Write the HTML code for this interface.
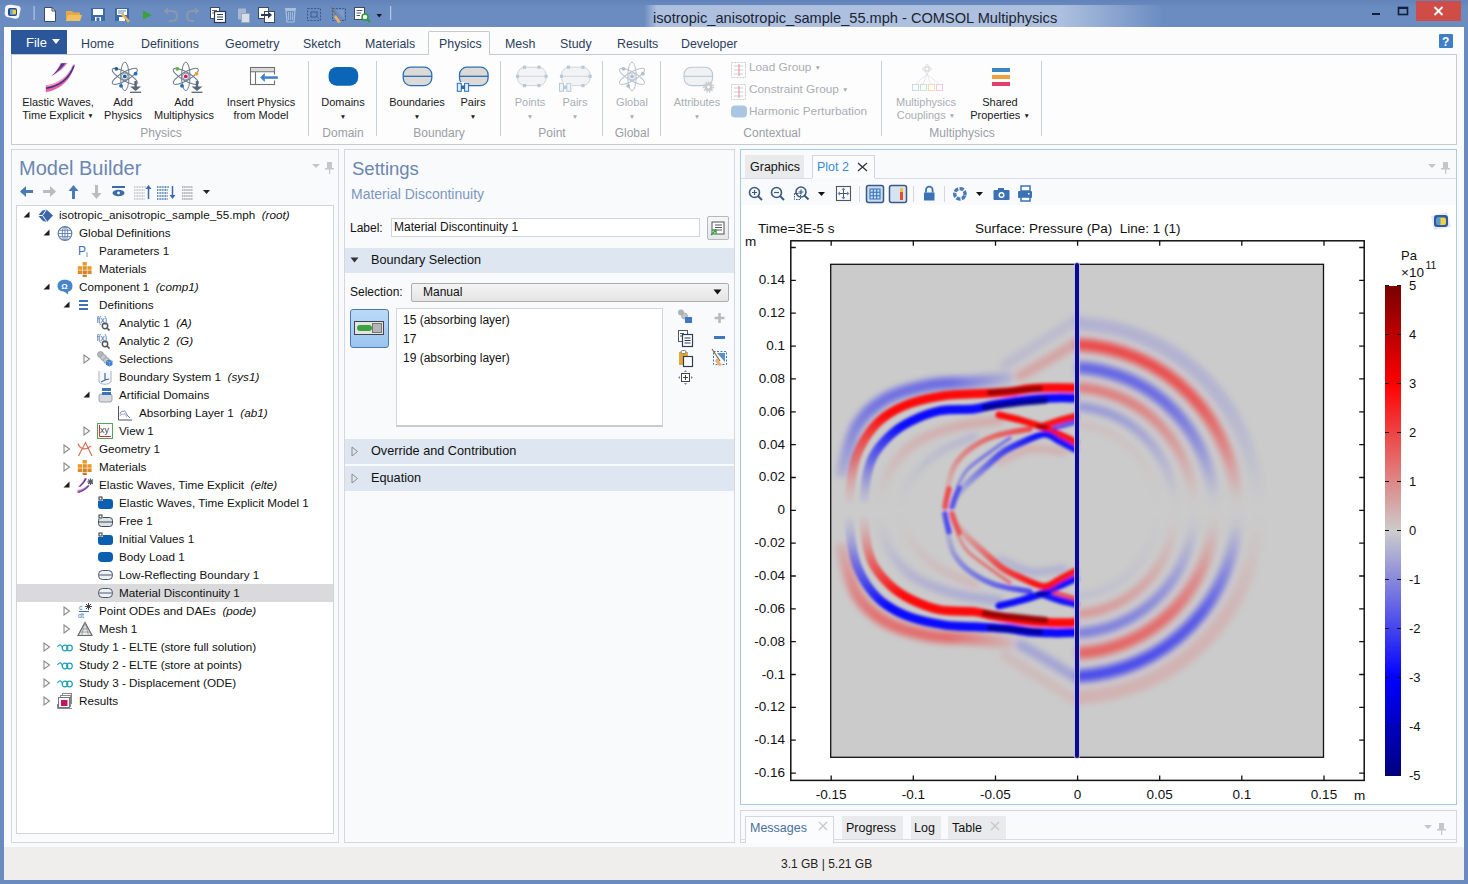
<!DOCTYPE html><html><head><meta charset="utf-8"><style>
html,body{margin:0;padding:0;}
body{width:1468px;height:884px;position:relative;overflow:hidden;background:#6a8bbf;font-family:"Liberation Sans", sans-serif;}
div,svg{box-sizing:border-box;}
</style></head><body>
<div style="position:absolute;left:0px;top:0px;width:1468px;height:27px;background:linear-gradient(#6283b9,#6a8cc1 30%,#6a8cc1)"></div>
<div style="position:absolute;left:644px;top:5px;width:520px;height:22px;background:linear-gradient(90deg,rgba(190,205,230,0) 0%,rgba(190,205,230,.8) 2.5%,rgba(190,205,230,.8) 80%,rgba(190,205,230,0) 100%);"></div>
<div style="position:absolute;left:653px;top:10.64px;font-size:14.6px;line-height:1;color:#1b2433;white-space:nowrap;">isotropic_anisotropic_sample_55.mph - COMSOL Multiphysics</div>
<div style="position:absolute;left:1416px;top:1px;width:45px;height:20px;background:#cf4d46"></div>
<svg style="position:absolute;left:1416px;top:1px;" width="45" height="20" viewBox="0 0 45 20"><path d="M18.5 6 L26.5 14 M26.5 6 L18.5 14" stroke="#fff" stroke-width="1.8"/></svg>
<div style="position:absolute;left:1372px;top:13px;width:8px;height:2px;background:#10203a"></div>
<svg style="position:absolute;left:1396px;top:5px;" width="14" height="12" viewBox="0 0 14 12"><rect x="2.5" y="2.5" width="9" height="7" fill="none" stroke="#10203a" stroke-width="1.6"/><rect x="2" y="2" width="10" height="2" fill="#10203a"/></svg>
<svg style="position:absolute;left:0px;top:0px;pointer-events:none" width="400" height="27" viewBox="0 0 400 27"><path d="M5 8 C5 5 9 4 13 5 L19 6 C21 7 21 9 20 12 L19 17 C18 19 15 19 12 18 L7 17 C5 16 4 14 5 11 Z" fill="#f4f6fa"/><rect x="8" y="8" width="9" height="8" rx="2" fill="#22489a"/><rect x="10" y="9.5" width="6" height="5" rx="1" fill="#e8d040"/><rect x="10" y="9.5" width="2.5" height="5" fill="#5aa0d8"/><rect x="33.5" y="6" width="1.2" height="14" fill="#c8d4e6" opacity=".8"/><path d="M44.5 7.5 H52 L55.5 11 V21.5 H44.5 Z" fill="#fff" stroke="#3a4a60" stroke-width="1"/><path d="M52 7.5 V11 H55.5" fill="none" stroke="#3a4a60" stroke-width="1"/><path d="M66 11 H72 L73.5 12.5 H80 V21 H66 Z" fill="#e8a840"/><path d="M68 15 H82 L80 21 H66 Z" fill="#f2c060"/><rect x="91" y="8" width="14" height="13" fill="#3a6aa8"/><rect x="93" y="9" width="10" height="6" fill="#fff"/><rect x="95" y="17" width="6" height="4" fill="#fff"/><rect x="96.5" y="17.5" width="3" height="3.5" fill="#3a6aa8"/><rect x="115" y="8" width="14" height="13" fill="#3a6aa8"/><rect x="117" y="9" width="10" height="6" fill="#fff"/><path d="M118 11 H126 M118 13 H124" stroke="#3a6aa8" stroke-width=".8"/><rect x="119" y="17" width="6" height="4" fill="#fff"/><path d="M123 13 L130 21 L128 22.5 L121 15 Z" fill="#e8b060"/><path d="M143 10.5 L152 15 L143 19.5 Z" fill="#3aa03a"/><path d="M166 11 H172 C176 11 177 14 177 16 C177 19 175 21 172 21 H169" fill="none" stroke="#8a98ac" stroke-width="2"/><path d="M163.5 11 L168 7.5 V14.5 Z" fill="#8a98ac"/><path d="M196 11 H192 C188 11 187 14 187 16 C187 19 189 21 192 21 H194" fill="none" stroke="#8a98ac" stroke-width="2"/><path d="M199.5 11 L195 7.5 V14.5 Z" fill="#8a98ac"/><rect x="210.5" y="7.5" width="9" height="11" fill="#fff" stroke="#3a4a60"/><path d="M212 10.5 H217 M212 13 H217" stroke="#3a4a60" stroke-width=".8"/><rect x="214.5" y="11.5" width="11" height="11" fill="#fff" stroke="#2a3a55" stroke-width="1.2"/><path d="M217 14.5 H223 M217 17 H223 M217 19.5 H223" stroke="#2a3a55" stroke-width="1"/><rect x="238" y="8.5" width="8" height="11" rx="1" fill="#c0cad8" opacity=".7"/><rect x="241.5" y="13.5" width="8" height="9" fill="#d8dee8" stroke="#9aa8bc"/><rect x="258.5" y="7.5" width="10" height="11" fill="#fff" stroke="#3a4a60"/><rect x="264.5" y="11.5" width="10" height="11" fill="#fff" stroke="#3a4a60"/><path d="M261 15 H270" stroke="#2a3a55" stroke-width="2"/><path d="M272 15 L268 11.5 V18.5 Z" fill="#2a3a55"/><rect x="285" y="8" width="11" height="2" fill="#a8c0dc"/><path d="M286 10.5 H295 L294 22 H287 Z" fill="none" stroke="#a8c0dc" stroke-width="1.2"/><path d="M288.5 12 V20 M290.5 12 V20 M292.5 12 V20" stroke="#a8c0dc" stroke-width=".9"/><rect x="307.5" y="8.5" width="13" height="12" fill="none" stroke="#3a5a88" stroke-dasharray="2 1.3"/><rect x="311" y="12" width="6" height="5" fill="none" stroke="#3a5a88"/><path d="M316 16 L321 21 L319 18 Z" fill="#3a7ac0"/><rect x="332.5" y="8.5" width="13" height="12" fill="none" stroke="#3a5a88" stroke-dasharray="2 1.3"/><path d="M336 10 L344 10 L344 19 Z" fill="#7a9ac8"/><path d="M331 7 L339 19" stroke="#8a6a3a" stroke-width="1"/><path d="M336 15 L341 22 L338 23 L334 17 Z" fill="#e8b070"/><rect x="354.5" y="7.5" width="10" height="12" fill="#fff" stroke="#3a4a60"/><path d="M356.5 10.5 H362.5 M356.5 13 H361 M356.5 15.5 H360" stroke="#3a4a60" stroke-width=".9"/><circle cx="365" cy="17" r="3" fill="#fff" stroke="#2a9a3a" stroke-width="1.5"/><path d="M367 19 L370 22" stroke="#2a9a3a" stroke-width="1.8"/><path d="M376.5 14 H382 L379.25 17.5 Z" fill="#101828"/><rect x="390" y="6" width="1.2" height="14" fill="#c8d4e6" opacity=".8"/></svg>
<div style="position:absolute;left:4px;top:27px;width:1460px;height:853px;background:#f9fafc"></div>
<div style="position:absolute;left:4px;top:27px;width:1460px;height:27px;background:#fcfcfd"></div>
<div style="position:absolute;left:11px;top:30px;width:56px;height:24px;background:#2b579a"></div>
<div style="position:absolute;left:26px;top:35.5px;font-size:13px;line-height:1;color:#fff;white-space:nowrap;">File</div>
<svg style="position:absolute;left:51px;top:38px;" width="10" height="8" viewBox="0 0 10 8"><path d="M1 1 L9 1 L5 6 Z" fill="#fff"/></svg>
<div style="position:absolute;left:81px;top:37.5px;font-size:12.4px;line-height:1;color:#2c3e5a;white-space:nowrap;">Home</div>
<div style="position:absolute;left:141px;top:37.5px;font-size:12.4px;line-height:1;color:#2c3e5a;white-space:nowrap;">Definitions</div>
<div style="position:absolute;left:225px;top:37.5px;font-size:12.4px;line-height:1;color:#2c3e5a;white-space:nowrap;">Geometry</div>
<div style="position:absolute;left:303px;top:37.5px;font-size:12.4px;line-height:1;color:#2c3e5a;white-space:nowrap;">Sketch</div>
<div style="position:absolute;left:365px;top:37.5px;font-size:12.4px;line-height:1;color:#2c3e5a;white-space:nowrap;">Materials</div>
<div style="position:absolute;left:439px;top:37.5px;font-size:12.4px;line-height:1;color:#2c3e5a;white-space:nowrap;">Physics</div>
<div style="position:absolute;left:505px;top:37.5px;font-size:12.4px;line-height:1;color:#2c3e5a;white-space:nowrap;">Mesh</div>
<div style="position:absolute;left:560px;top:37.5px;font-size:12.4px;line-height:1;color:#2c3e5a;white-space:nowrap;">Study</div>
<div style="position:absolute;left:617px;top:37.5px;font-size:12.4px;line-height:1;color:#2c3e5a;white-space:nowrap;">Results</div>
<div style="position:absolute;left:681px;top:37.5px;font-size:12.4px;line-height:1;color:#2c3e5a;white-space:nowrap;">Developer</div>
<div style="position:absolute;left:428px;top:31px;width:62px;height:24px;background:#fdfdfe;border:1px solid #c6cbd3;border-bottom:none;border-radius:2px 2px 0 0"></div>
<div style="position:absolute;left:439px;top:37.5px;font-size:12.4px;line-height:1;color:#2c3e5a;white-space:nowrap;">Physics</div>
<div style="position:absolute;left:1439px;top:34px;width:14px;height:14px;background:#3f7fc6;border-radius:1px"></div>
<div style="position:absolute;left:1442px;top:35.84px;font-size:12px;line-height:1;color:#fff;white-space:nowrap;font-weight:bold">?</div>
<div style="position:absolute;left:11px;top:54px;width:1446px;height:91px;background:#fdfdfe;border:1px solid #c6cbd3"></div>
<div style="position:absolute;left:429px;top:53px;width:60px;height:3px;background:#fdfdfe"></div>
<div style="position:absolute;left:308px;top:61px;width:1px;height:75px;background:#c8ced8"></div>
<div style="position:absolute;left:376px;top:61px;width:1px;height:75px;background:#c8ced8"></div>
<div style="position:absolute;left:500px;top:61px;width:1px;height:75px;background:#c8ced8"></div>
<div style="position:absolute;left:602px;top:61px;width:1px;height:75px;background:#c8ced8"></div>
<div style="position:absolute;left:660px;top:61px;width:1px;height:75px;background:#c8ced8"></div>
<div style="position:absolute;left:881px;top:61px;width:1px;height:75px;background:#c8ced8"></div>
<div style="position:absolute;left:1041px;top:61px;width:1px;height:75px;background:#c8ced8"></div>
<div style="position:absolute;left:-42px;width:200px;text-align:center;top:96.69px;font-size:11px;line-height:1;color:#1a1a1a;white-space:nowrap">Elastic Waves,</div>
<div style="position:absolute;left:-42px;width:200px;text-align:center;top:109.69px;font-size:11px;line-height:1;color:#1a1a1a;white-space:nowrap">Time Explicit <span style="font-size:6.5px;vertical-align:1.5px">&#9660;</span></div>
<div style="position:absolute;left:23px;width:200px;text-align:center;top:96.69px;font-size:11px;line-height:1;color:#1a1a1a;white-space:nowrap">Add</div>
<div style="position:absolute;left:23px;width:200px;text-align:center;top:109.69px;font-size:11px;line-height:1;color:#1a1a1a;white-space:nowrap">Physics</div>
<div style="position:absolute;left:84px;width:200px;text-align:center;top:96.69px;font-size:11px;line-height:1;color:#1a1a1a;white-space:nowrap">Add</div>
<div style="position:absolute;left:84px;width:200px;text-align:center;top:109.69px;font-size:11px;line-height:1;color:#1a1a1a;white-space:nowrap">Multiphysics</div>
<div style="position:absolute;left:161px;width:200px;text-align:center;top:96.69px;font-size:11px;line-height:1;color:#1a1a1a;white-space:nowrap">Insert Physics</div>
<div style="position:absolute;left:161px;width:200px;text-align:center;top:109.69px;font-size:11px;line-height:1;color:#1a1a1a;white-space:nowrap">from Model</div>
<div style="position:absolute;left:61px;width:200px;text-align:center;top:126.84px;font-size:12px;line-height:1;color:#9a9ea5;white-space:nowrap">Physics</div>
<div style="position:absolute;left:243px;width:200px;text-align:center;top:96.69px;font-size:11px;line-height:1;color:#1a1a1a;white-space:nowrap">Domains</div>
<div style="position:absolute;left:243px;width:200px;text-align:center;top:113.5px;font-size:6.5px;line-height:1;color:#1a1a1a;white-space:nowrap">&#9660;</div>
<div style="position:absolute;left:243px;width:200px;text-align:center;top:126.84px;font-size:12px;line-height:1;color:#9a9ea5;white-space:nowrap">Domain</div>
<div style="position:absolute;left:317px;width:200px;text-align:center;top:96.69px;font-size:11px;line-height:1;color:#1a1a1a;white-space:nowrap">Boundaries</div>
<div style="position:absolute;left:317px;width:200px;text-align:center;top:113.5px;font-size:6.5px;line-height:1;color:#1a1a1a;white-space:nowrap">&#9660;</div>
<div style="position:absolute;left:373px;width:200px;text-align:center;top:96.69px;font-size:11px;line-height:1;color:#1a1a1a;white-space:nowrap">Pairs</div>
<div style="position:absolute;left:373px;width:200px;text-align:center;top:113.5px;font-size:6.5px;line-height:1;color:#1a1a1a;white-space:nowrap">&#9660;</div>
<div style="position:absolute;left:339px;width:200px;text-align:center;top:126.84px;font-size:12px;line-height:1;color:#9a9ea5;white-space:nowrap">Boundary</div>
<div style="position:absolute;left:430px;width:200px;text-align:center;top:96.69px;font-size:11px;line-height:1;color:#a9adb3;white-space:nowrap">Points</div>
<div style="position:absolute;left:430px;width:200px;text-align:center;top:113.5px;font-size:6.5px;line-height:1;color:#a9adb3;white-space:nowrap">&#9660;</div>
<div style="position:absolute;left:475px;width:200px;text-align:center;top:96.69px;font-size:11px;line-height:1;color:#a9adb3;white-space:nowrap">Pairs</div>
<div style="position:absolute;left:475px;width:200px;text-align:center;top:113.5px;font-size:6.5px;line-height:1;color:#a9adb3;white-space:nowrap">&#9660;</div>
<div style="position:absolute;left:452px;width:200px;text-align:center;top:126.84px;font-size:12px;line-height:1;color:#9a9ea5;white-space:nowrap">Point</div>
<div style="position:absolute;left:532px;width:200px;text-align:center;top:96.69px;font-size:11px;line-height:1;color:#a9adb3;white-space:nowrap">Global</div>
<div style="position:absolute;left:532px;width:200px;text-align:center;top:113.5px;font-size:6.5px;line-height:1;color:#a9adb3;white-space:nowrap">&#9660;</div>
<div style="position:absolute;left:532px;width:200px;text-align:center;top:126.84px;font-size:12px;line-height:1;color:#9a9ea5;white-space:nowrap">Global</div>
<div style="position:absolute;left:597px;width:200px;text-align:center;top:96.69px;font-size:11px;line-height:1;color:#a9adb3;white-space:nowrap">Attributes</div>
<div style="position:absolute;left:597px;width:200px;text-align:center;top:113.5px;font-size:6.5px;line-height:1;color:#a9adb3;white-space:nowrap">&#9660;</div>
<div style="position:absolute;left:749px;top:62.01px;font-size:11.8px;line-height:1;color:#a9adb3;white-space:nowrap;">Load Group <span style="font-size:6.5px;vertical-align:1.5px">&#9660;</span></div>
<div style="position:absolute;left:749px;top:84.01px;font-size:11.8px;line-height:1;color:#a9adb3;white-space:nowrap;">Constraint Group <span style="font-size:6.5px;vertical-align:1.5px">&#9660;</span></div>
<div style="position:absolute;left:749px;top:106.01px;font-size:11.8px;line-height:1;color:#a9adb3;white-space:nowrap;">Harmonic Perturbation</div>
<div style="position:absolute;left:672px;width:200px;text-align:center;top:126.84px;font-size:12px;line-height:1;color:#9a9ea5;white-space:nowrap">Contextual</div>
<div style="position:absolute;left:826px;width:200px;text-align:center;top:96.69px;font-size:11px;line-height:1;color:#a9adb3;white-space:nowrap">Multiphysics</div>
<div style="position:absolute;left:826px;width:200px;text-align:center;top:109.69px;font-size:11px;line-height:1;color:#a9adb3;white-space:nowrap">Couplings <span style="font-size:6.5px;vertical-align:1.5px">&#9660;</span></div>
<div style="position:absolute;left:900px;width:200px;text-align:center;top:96.69px;font-size:11px;line-height:1;color:#1a1a1a;white-space:nowrap">Shared</div>
<div style="position:absolute;left:900px;width:200px;text-align:center;top:109.69px;font-size:11px;line-height:1;color:#1a1a1a;white-space:nowrap">Properties <span style="font-size:6.5px;vertical-align:1.5px">&#9660;</span></div>
<div style="position:absolute;left:862px;width:200px;text-align:center;top:126.84px;font-size:12px;line-height:1;color:#9a9ea5;white-space:nowrap">Multiphysics</div>
<svg style="position:absolute;left:0px;top:0px;pointer-events:none" width="1468" height="140" viewBox="0 0 1468 140"><path d="M45.8 92.3 C58 90.5 70.5 82 75 64.8 L73.2 64.5 C68 77 58 83.8 45.8 85.3 Z" fill="#e6609c"/><path d="M46 86.2 C58 84.5 68 78 73.5 65.5" fill="none" stroke="#f4b0d0" stroke-width="1"/><path d="M46 88.3 C57.5 86.5 68.5 80 73.8 66" fill="none" stroke="#34358a" stroke-width="1.5"/><path d="M50.8 76.5 C57 73.5 63.5 68.5 67.5 63 L60.5 63.2 C59 67.5 55.5 72.5 50.8 76.5 Z" fill="#e070b0"/><path d="M51.5 75.8 C57.5 72 62 67.5 65.5 63.2 L61.5 63.2 C59.5 67.5 56 72 51.5 75.8 Z" fill="#4a3a90"/><g opacity="1"><ellipse cx="124.8" cy="76.4" rx="4.2" ry="14.3" fill="none" stroke="#6b7b8a" stroke-width="1" transform="rotate(0 124.8 76.4)"/><ellipse cx="124.8" cy="76.4" rx="4.2" ry="14.3" fill="none" stroke="#6b7b8a" stroke-width="1" transform="rotate(60 124.8 76.4)"/><ellipse cx="124.8" cy="76.4" rx="4.2" ry="14.3" fill="none" stroke="#6b7b8a" stroke-width="1" transform="rotate(-60 124.8 76.4)"/><circle cx="124.8" cy="76.4" r="3.3" fill="none" stroke="#6b7b8a" stroke-width=".8"/><circle cx="124.8" cy="76.4" r="1.9" fill="#1f5f9f"/><circle cx="116.3" cy="68.80000000000001" r="1.9" fill="#1f5f9f"/><circle cx="135.6" cy="73.7" r="1.9" fill="#1f6fb8"/><circle cx="121.0" cy="85.80000000000001" r="1.9" fill="#1f6fb8"/></g><path d="M135.6 81 V88" stroke="#5a6675" stroke-width="2.4"/><path d="M130.1 86.5 H141.1 L135.6 91 Z" fill="#5a6675"/><path d="M130.1 92.3 H141.1" stroke="#5a6675" stroke-width="1.3"/><g opacity="1"><ellipse cx="185.8" cy="76.4" rx="4.2" ry="14.3" fill="none" stroke="#6b7b8a" stroke-width="1" transform="rotate(0 185.8 76.4)"/><ellipse cx="185.8" cy="76.4" rx="4.2" ry="14.3" fill="none" stroke="#6b7b8a" stroke-width="1" transform="rotate(60 185.8 76.4)"/><ellipse cx="185.8" cy="76.4" rx="4.2" ry="14.3" fill="none" stroke="#6b7b8a" stroke-width="1" transform="rotate(-60 185.8 76.4)"/><circle cx="185.8" cy="76.4" r="3.3" fill="none" stroke="#6b7b8a" stroke-width=".8"/><circle cx="185.8" cy="76.4" r="1.9" fill="#d81b60"/><circle cx="177.3" cy="68.80000000000001" r="1.9" fill="#5cb83a"/><circle cx="196.60000000000002" cy="73.7" r="1.9" fill="#e8a030"/><circle cx="182.0" cy="85.80000000000001" r="1.9" fill="#1f6fb8"/></g><path d="M197 81 V88" stroke="#5a6675" stroke-width="2.4"/><path d="M191.5 86.5 H202.5 L197 91 Z" fill="#5a6675"/><path d="M191.5 92.3 H202.5" stroke="#5a6675" stroke-width="1.3"/><rect x="250.5" y="67.5" width="24" height="17" fill="#fff" stroke="#707070" stroke-width="1.1"/><rect x="251" y="68" width="23" height="3.5" fill="#d9d9d9"/><path d="M250.5 71.8 H274.5 M255.5 72 V84.5" stroke="#707070" stroke-width="1.1"/><rect x="273" y="74.5" width="3" height="6" fill="#fdfdfe"/><path d="M264.5 76.3 H277.8 V78.8 H264.5 Z" fill="#3d7fc4"/><path d="M260.2 77.5 L264.8 73 V82 Z" fill="#3d7fc4"/><rect x="328.6" y="66.9" width="29.6" height="18.8" rx="8" fill="#0b66b8"/><rect x="403.2" y="67.2" width="28.6" height="18.4" rx="7.5" fill="#dcdad6" stroke="#2a6db5" stroke-width="1.3"/><path d="M403.2 76.3 H431.8" stroke="#2a6db5" stroke-width="1.3"/><rect x="459.5" y="67.2" width="28.6" height="18.4" rx="7.5" fill="#dcdad6" stroke="#2a6db5" stroke-width="1.3"/><path d="M459.5 76.3 H488.1" stroke="#2a6db5" stroke-width="1.3"/><rect x="456" y="82" width="13" height="10" fill="#fdfdfe"/><rect x="457.3" y="83.3" width="4" height="8" fill="#e4edf6" stroke="#2a6db5" stroke-width="1"/><rect x="464.6" y="83.3" width="4" height="8" fill="#e4edf6" stroke="#2a6db5" stroke-width="1"/><rect x="461" y="85.5" width="4" height="3.5" fill="#1f6fb8"/><rect x="517.5" y="67.2" width="28.6" height="18.4" rx="7.5" fill="#f2f3f4" stroke="#cdd5dd" stroke-width="1"/><path d="M517.5 76.3 H546.1" stroke="#cdd5dd" stroke-width="1"/><rect x="522.9" y="65.60000000000001" width="3.2" height="3.2" fill="#b9c8d6"/><rect x="537.4" y="65.60000000000001" width="3.2" height="3.2" fill="#b9c8d6"/><rect x="515.9" y="74.7" width="3.2" height="3.2" fill="#b9c8d6"/><rect x="544.5" y="74.7" width="3.2" height="3.2" fill="#b9c8d6"/><rect x="522.9" y="84.0" width="3.2" height="3.2" fill="#b9c8d6"/><rect x="537.4" y="84.0" width="3.2" height="3.2" fill="#b9c8d6"/><rect x="561.5" y="67.2" width="28.6" height="18.4" rx="7.5" fill="#f2f3f4" stroke="#cdd5dd" stroke-width="1"/><path d="M561.5 76.3 H590.1" stroke="#cdd5dd" stroke-width="1"/><rect x="566.9" y="65.60000000000001" width="3.2" height="3.2" fill="#b9c8d6"/><rect x="581.4" y="65.60000000000001" width="3.2" height="3.2" fill="#b9c8d6"/><rect x="559.9" y="74.7" width="3.2" height="3.2" fill="#b9c8d6"/><rect x="588.5" y="74.7" width="3.2" height="3.2" fill="#b9c8d6"/><rect x="566.9" y="84.0" width="3.2" height="3.2" fill="#b9c8d6"/><rect x="581.4" y="84.0" width="3.2" height="3.2" fill="#b9c8d6"/><rect x="559" y="82" width="13" height="10" fill="#fdfdfe"/><rect x="559.5" y="83.3" width="4" height="8" fill="#eef3f8" stroke="#b9c8d6" stroke-width="1"/><rect x="566.8" y="83.3" width="4" height="8" fill="#eef3f8" stroke="#b9c8d6" stroke-width="1"/><rect x="563" y="85.5" width="4" height="3.5" fill="#b9c8d6"/><g opacity="1"><ellipse cx="632" cy="76.4" rx="4.2" ry="14.3" fill="none" stroke="#b9c3cc" stroke-width="1" transform="rotate(0 632 76.4)"/><ellipse cx="632" cy="76.4" rx="4.2" ry="14.3" fill="none" stroke="#b9c3cc" stroke-width="1" transform="rotate(60 632 76.4)"/><ellipse cx="632" cy="76.4" rx="4.2" ry="14.3" fill="none" stroke="#b9c3cc" stroke-width="1" transform="rotate(-60 632 76.4)"/><circle cx="632" cy="76.4" r="3.3" fill="none" stroke="#b9c3cc" stroke-width=".8"/><circle cx="632" cy="76.4" r="1.9" fill="#b0bfcc"/><circle cx="623.5" cy="68.80000000000001" r="1.9" fill="#b0bfcc"/><circle cx="642.8" cy="73.7" r="1.9" fill="#b0bfcc"/><circle cx="628.2" cy="85.80000000000001" r="1.9" fill="#b0bfcc"/></g><rect x="684" y="67.2" width="28.6" height="18.4" rx="7.5" fill="#f0f1f3" stroke="#b9c8d6" stroke-width="1.1"/><path d="M684 76.3 H712.6" stroke="#b9c8d6" stroke-width="1.1"/><circle cx="708.5" cy="87" r="4" fill="#c8cacc"/><circle cx="708.5" cy="87" r="4.8" fill="none" stroke="#c8cacc" stroke-width="1.6" stroke-dasharray="1.5 1.2"/><circle cx="708.5" cy="87" r="1.4" fill="#fdfdfe"/><rect x="731.5" y="62.5" width="14" height="15" fill="none" stroke="#c9cdd2" stroke-width="1" stroke-dasharray="2 1"/><path d="M734 66 H743 M734 70 H743 M734 74 H743" stroke="#c9cdd2" stroke-width="1"/><path d="M739 64 V76" stroke="#e6a0a8" stroke-width="1.2"/><rect x="731.5" y="84.5" width="14" height="15" fill="none" stroke="#c9cdd2" stroke-width="1" stroke-dasharray="2 1"/><path d="M734 88 H743 M734 92 H743 M734 96 H743" stroke="#c9cdd2" stroke-width="1"/><path d="M739 86 V98" stroke="#e6a0a8" stroke-width="1.2"/><rect x="731" y="105.5" width="16" height="12" rx="4" fill="#a9c6e2"/><g opacity=".55"><circle cx="927" cy="69" r="3" fill="none" stroke="#c0c4c8"/><ellipse cx="927" cy="69" rx="1.6" ry="5" fill="none" stroke="#c0c4c8" stroke-width=".8"/><ellipse cx="927" cy="69" rx="5" ry="1.6" fill="none" stroke="#c0c4c8" stroke-width=".8"/><path d="M927 74 L915.5 84 M927 74 L923 84 M927 74 L931 84 M927 74 L939 84" stroke="#c8ccd0" stroke-width=".8"/><rect x="912.5" y="84.5" width="6" height="6" fill="none" stroke="#9cc0e0"/><rect x="920.5" y="84.5" width="6" height="6" fill="none" stroke="#a8d0a0"/><rect x="928.5" y="84.5" width="6" height="6" fill="none" stroke="#f0c080"/><rect x="936.5" y="84.5" width="6" height="6" fill="none" stroke="#f0a0c0"/></g><rect x="992" y="68" width="18" height="4" fill="#3d86c6"/><rect x="992" y="75" width="18" height="4" fill="#f0a040"/><rect x="992" y="82" width="18" height="4" fill="#e0406e"/></svg>
<div style="position:absolute;left:11px;top:149px;width:328px;height:694px;background:#f9fafc;border:1px solid #d6d7da"></div>
<div style="position:absolute;left:19px;top:158.07px;font-size:20px;line-height:1;color:#6a86b2;white-space:nowrap;">Model Builder</div>
<div style="position:absolute;left:16px;top:205px;width:318px;height:629px;background:#fff;border:1px solid #d3d4d6"></div>
<svg style="position:absolute;left:18px;top:184px;" width="200" height="16" viewBox="0 0 200 16"><path d="M3 7.5 H15" stroke="#4a7bb7" stroke-width="3"/><path d="M2 7.5 L8 2 V13 Z" fill="#4a7bb7"/><path d="M25 7.5 H37" stroke="#b9bcc0" stroke-width="3"/><path d="M38 7.5 L32 2 V13 Z" fill="#b9bcc0"/><path d="M55.5 4 V15" stroke="#4a7bb7" stroke-width="3"/><path d="M55.5 1 L50.5 7 H60.5 Z" fill="#4a7bb7"/><path d="M78.5 1 V12" stroke="#b9bcc0" stroke-width="3"/><path d="M78.5 15 L73.5 9 H83.5 Z" fill="#b9bcc0"/><rect x="94" y="2" width="13" height="2" fill="#3a6aa8"/><ellipse cx="100.5" cy="9" rx="6" ry="3.2" fill="#3a6aa8"/><circle cx="100.5" cy="9" r="1.4" fill="#fff"/><path d="M116 3 H128 M116 6 H127 M116 9 H127 M116 12 H127 M116 15 H127" stroke="#9aa3ad" stroke-width="1.2" stroke-dasharray="1 .6"/><path d="M130.5 15 V4" stroke="#3a6aa8" stroke-width="1.5"/><path d="M130.5 1 L127.5 5 H133.5Z" fill="#3a6aa8"/><path d="M139 3 H151 M139 6 H150 M139 9 H150 M139 12 H150 M139 15 H150" stroke="#3a6aa8" stroke-width="1.4" stroke-dasharray="1 .6"/><path d="M154.5 2 V12" stroke="#3a6aa8" stroke-width="1.5"/><path d="M154.5 15 L151.5 11 H157.5Z" fill="#3a6aa8"/><path d="M164 3 H175 M164 6 H175 M164 9 H175 M164 12 H175 M164 15 H175" stroke="#a0a4a8" stroke-width="1.4" stroke-dasharray="1.5 .6"/><path d="M185 6 L192 6 L188.5 10 Z" fill="#222"/></svg>
<svg style="position:absolute;left:311px;top:161px;" width="24" height="14" viewBox="0 0 24 14"><path d="M1 3 H9 L5 7 Z" fill="#c3c6ca"/><rect x="16" y="1" width="5" height="7" fill="#c3c6ca"/><rect x="14" y="7" width="9" height="1.5" fill="#c3c6ca"/><rect x="18" y="8" width="1.2" height="5" fill="#c3c6ca"/></svg>
<svg style="position:absolute;left:707px;top:161px;" width="24" height="14" viewBox="0 0 24 14"><path d="M1 3 H9 L5 7 Z" fill="#c3c6ca"/><rect x="16" y="1" width="5" height="7" fill="#c3c6ca"/><rect x="14" y="7" width="9" height="1.5" fill="#c3c6ca"/><rect x="18" y="8" width="1.2" height="5" fill="#c3c6ca"/></svg>
<svg style="position:absolute;left:23px;top:211px;" width="8" height="8" viewBox="0 0 8 8"><path d="M6.5 0.5 V6.5 H0.5 Z" fill="#1e1e1e"/></svg>
<svg style="position:absolute;left:37px;top:207px;" width="16" height="16" viewBox="0 0 16 16"><path d="M1 8.5 L5.5 3.5 L9.5 2.5 L16 8.5 L10 15 L6 14 Z" fill="#3d66aa"/><path d="M1 8.5 H5.5 L9.5 2.5 M5.5 8.5 L10 15" stroke="#fff" stroke-width="1" fill="none"/></svg>
<div style="position:absolute;left:59px;top:206px;height:18px;line-height:18px;font-size:11.7px;color:#111;white-space:nowrap">isotropic_anisotropic_sample_55.mph&nbsp;&nbsp;<i>(root)</i></div>
<svg style="position:absolute;left:43px;top:229px;" width="8" height="8" viewBox="0 0 8 8"><path d="M6.5 0.5 V6.5 H0.5 Z" fill="#1e1e1e"/></svg>
<svg style="position:absolute;left:57px;top:225px;" width="16" height="16" viewBox="0 0 16 16"><circle cx="8" cy="8.5" r="6.8" fill="none" stroke="#5b7eaa" stroke-width="1.2"/><ellipse cx="8" cy="8.5" rx="2.8" ry="6.8" fill="none" stroke="#5b7eaa" stroke-width=".9"/><path d="M8 1.7 V15.3 M1.2 8.5 H14.8 M2.2 5.3 H13.8 M2.2 11.7 H13.8" stroke="#5b7eaa" stroke-width=".9"/></svg>
<div style="position:absolute;left:79px;top:224px;height:18px;line-height:18px;font-size:11.7px;color:#111;white-space:nowrap">Global Definitions</div>
<svg style="position:absolute;left:77px;top:243px;" width="16" height="16" viewBox="0 0 16 16"><text x="1" y="12" font-family="Liberation Sans" font-size="12" fill="#3d6fb3">P</text><text x="9" y="14" font-family="Liberation Sans" font-size="8" fill="#3d6fb3">i</text></svg>
<div style="position:absolute;left:99px;top:242px;height:18px;line-height:18px;font-size:11.7px;color:#111;white-space:nowrap">Parameters 1</div>
<svg style="position:absolute;left:77px;top:261px;" width="16" height="16" viewBox="0 0 16 16"><g fill="#e99a2a"><rect x="5.6" y="1" width="4.2" height="3.6"/><rect x="0.8" y="5.2" width="4.2" height="3.6"/><rect x="5.6" y="5.2" width="4.2" height="3.6" fill="#dd9030"/><rect x="10.4" y="5.2" width="4.2" height="3.6"/><rect x="0.8" y="9.4" width="4.2" height="3.6" fill="#e08a22"/><rect x="5.6" y="9.4" width="4.2" height="3.6" fill="#d08030"/><rect x="10.4" y="9.4" width="4.2" height="3.6" fill="#e08a22"/><rect x="5.6" y="13.6" width="4.2" height="3.4" fill="#c87a28"/></g></svg>
<div style="position:absolute;left:99px;top:260px;height:18px;line-height:18px;font-size:11.7px;color:#111;white-space:nowrap">Materials</div>
<svg style="position:absolute;left:43px;top:283px;" width="8" height="8" viewBox="0 0 8 8"><path d="M6.5 0.5 V6.5 H0.5 Z" fill="#1e1e1e"/></svg>
<svg style="position:absolute;left:57px;top:279px;" width="16" height="16" viewBox="0 0 16 16"><path d="M0.5 7 C0.5 2.5 4 0.8 8 0.8 C12.5 0.8 15.5 3 15.5 7 C15.5 10.5 13.5 12 11.5 12.5 L10.5 15.5 C9 14 8 13 6.5 12.6 C3 12 0.5 10.5 0.5 7Z" fill="#4585c8"/><text x="4.3" y="10" font-family="Liberation Sans" font-size="8" font-weight="bold" fill="#fff">&#937;</text></svg>
<div style="position:absolute;left:79px;top:278px;height:18px;line-height:18px;font-size:11.7px;color:#111;white-space:nowrap">Component 1&nbsp;&nbsp;<i>(comp1)</i></div>
<svg style="position:absolute;left:63px;top:301px;" width="8" height="8" viewBox="0 0 8 8"><path d="M6.5 0.5 V6.5 H0.5 Z" fill="#1e1e1e"/></svg>
<svg style="position:absolute;left:77px;top:297px;" width="16" height="16" viewBox="0 0 16 16"><path d="M2 4 H11 M2 8 H11 M2 12 H11" stroke="#3d72b5" stroke-width="2"/></svg>
<div style="position:absolute;left:99px;top:296px;height:18px;line-height:18px;font-size:11.7px;color:#111;white-space:nowrap">Definitions</div>
<svg style="position:absolute;left:97px;top:315px;" width="16" height="16" viewBox="0 0 16 16"><text x="-0.5" y="7.5" font-family="Liberation Sans" font-size="8.5" fill="#3d6fb3" letter-spacing="-.6">f(x)</text><circle cx="8" cy="11" r="2.7" fill="none" stroke="#555" stroke-width="1.5"/><path d="M10 13 L12.5 15.5" stroke="#555" stroke-width="1.7"/></svg>
<div style="position:absolute;left:119px;top:314px;height:18px;line-height:18px;font-size:11.7px;color:#111;white-space:nowrap">Analytic 1&nbsp;&nbsp;<i>(A)</i></div>
<svg style="position:absolute;left:97px;top:333px;" width="16" height="16" viewBox="0 0 16 16"><text x="-0.5" y="7.5" font-family="Liberation Sans" font-size="8.5" fill="#3d6fb3" letter-spacing="-.6">f(x)</text><circle cx="8" cy="11" r="2.7" fill="none" stroke="#555" stroke-width="1.5"/><path d="M10 13 L12.5 15.5" stroke="#555" stroke-width="1.7"/></svg>
<div style="position:absolute;left:119px;top:332px;height:18px;line-height:18px;font-size:11.7px;color:#111;white-space:nowrap">Analytic 2&nbsp;&nbsp;<i>(G)</i></div>
<svg style="position:absolute;left:83px;top:354px;" width="8" height="10" viewBox="0 0 8 10"><path d="M1 1 L6.5 5 L1 9 Z" fill="none" stroke="#8a8a8a" stroke-width="1.1"/></svg>
<svg style="position:absolute;left:97px;top:351px;" width="16" height="16" viewBox="0 0 16 16"><circle cx="3.5" cy="3.5" r="3" fill="#b4b8bd" stroke="#8d9298" stroke-width=".7"/><circle cx="6.5" cy="6.5" r="3" fill="#c4c7cb" stroke="#8d9298" stroke-width=".7"/><circle cx="9.5" cy="9.5" r="3" fill="#c4c7cb" stroke="#8d9298" stroke-width=".7"/><path d="M9 10 L12 8.5 L15.5 10 V14 L12.5 15.5 L9 14 Z" fill="#3d7fc9"/><path d="M9 10 L12.5 11.5 L15.5 10 M12.5 11.5 V15.5" stroke="#8ab8e8" stroke-width=".6" fill="none"/></svg>
<div style="position:absolute;left:119px;top:350px;height:18px;line-height:18px;font-size:11.7px;color:#111;white-space:nowrap">Selections</div>
<svg style="position:absolute;left:97px;top:369px;" width="16" height="16" viewBox="0 0 16 16"><path d="M2 2 V13 C5 16 11 16 14 13 V2" fill="#f4f6f9" stroke="#a9b0b8" stroke-width="1"/><path d="M8 4 V11 M4 13 L8 11 L12 10" stroke="#3a6aa8" stroke-width="1.2" fill="none"/></svg>
<div style="position:absolute;left:119px;top:368px;height:18px;line-height:18px;font-size:11.7px;color:#111;white-space:nowrap">Boundary System 1&nbsp;&nbsp;<i>(sys1)</i></div>
<svg style="position:absolute;left:83px;top:391px;" width="8" height="8" viewBox="0 0 8 8"><path d="M6.5 0.5 V6.5 H0.5 Z" fill="#1e1e1e"/></svg>
<svg style="position:absolute;left:97px;top:387px;" width="16" height="16" viewBox="0 0 16 16"><rect x="2" y="7" width="13" height="8" rx="2" fill="#d6d9de" stroke="#9da3aa"/><rect x="5" y="1" width="9" height="3" fill="#3d72b5"/><rect x="5" y="5" width="9" height="3" fill="#3d72b5"/></svg>
<div style="position:absolute;left:119px;top:386px;height:18px;line-height:18px;font-size:11.7px;color:#111;white-space:nowrap">Artificial Domains</div>
<svg style="position:absolute;left:117px;top:405px;" width="16" height="16" viewBox="0 0 16 16"><path d="M1.5 1 V15 H15" stroke="#555" fill="none" stroke-width="1"/><path d="M3 9 C4 5 6 7 7 6 C8 5 9 8 10 10 L13 13" stroke="#5b86bf" fill="none" stroke-width="1"/><path d="M3 11 C4 8 6 10 7 9 C8 8 9 11 10 12" stroke="#999" fill="none" stroke-width="1"/></svg>
<div style="position:absolute;left:139px;top:404px;height:18px;line-height:18px;font-size:11.7px;color:#111;white-space:nowrap">Absorbing Layer 1&nbsp;&nbsp;<i>(ab1)</i></div>
<svg style="position:absolute;left:83px;top:426px;" width="8" height="10" viewBox="0 0 8 10"><path d="M1 1 L6.5 5 L1 9 Z" fill="none" stroke="#8a8a8a" stroke-width="1.1"/></svg>
<svg style="position:absolute;left:97px;top:423px;" width="16" height="16" viewBox="0 0 16 16"><rect x="0.5" y="0.5" width="15" height="15" fill="#fff" stroke="#5aa35a" stroke-width="1"/><text x="3" y="9.5" font-family="Liberation Sans" font-size="9" fill="#444">xy</text><path d="M2.5 2 V13.5 H14" stroke="#c33" stroke-width="1" fill="none"/></svg>
<div style="position:absolute;left:119px;top:422px;height:18px;line-height:18px;font-size:11.7px;color:#111;white-space:nowrap">View 1</div>
<svg style="position:absolute;left:63px;top:444px;" width="8" height="10" viewBox="0 0 8 10"><path d="M1 1 L6.5 5 L1 9 Z" fill="none" stroke="#8a8a8a" stroke-width="1.1"/></svg>
<svg style="position:absolute;left:77px;top:441px;" width="16" height="16" viewBox="0 0 16 16"><path d="M1.5 15 L8.5 1.5 L15 15" stroke="#d9705a" stroke-width="1.2" fill="none"/><path d="M1 2.5 C3 8 8 10 14 5" stroke="#d9705a" stroke-width="1.2" fill="none"/></svg>
<div style="position:absolute;left:99px;top:440px;height:18px;line-height:18px;font-size:11.7px;color:#111;white-space:nowrap">Geometry 1</div>
<svg style="position:absolute;left:63px;top:462px;" width="8" height="10" viewBox="0 0 8 10"><path d="M1 1 L6.5 5 L1 9 Z" fill="none" stroke="#8a8a8a" stroke-width="1.1"/></svg>
<svg style="position:absolute;left:77px;top:459px;" width="16" height="16" viewBox="0 0 16 16"><g fill="#e99a2a"><rect x="5.6" y="1" width="4.2" height="3.6"/><rect x="0.8" y="5.2" width="4.2" height="3.6"/><rect x="5.6" y="5.2" width="4.2" height="3.6" fill="#dd9030"/><rect x="10.4" y="5.2" width="4.2" height="3.6"/><rect x="0.8" y="9.4" width="4.2" height="3.6" fill="#e08a22"/><rect x="5.6" y="9.4" width="4.2" height="3.6" fill="#d08030"/><rect x="10.4" y="9.4" width="4.2" height="3.6" fill="#e08a22"/><rect x="5.6" y="13.6" width="4.2" height="3.4" fill="#c87a28"/></g></svg>
<div style="position:absolute;left:99px;top:458px;height:18px;line-height:18px;font-size:11.7px;color:#111;white-space:nowrap">Materials</div>
<svg style="position:absolute;left:63px;top:481px;" width="8" height="8" viewBox="0 0 8 8"><path d="M6.5 0.5 V6.5 H0.5 Z" fill="#1e1e1e"/></svg>
<svg style="position:absolute;left:77px;top:477px;" width="16" height="16" viewBox="0 0 16 16"><path d="M0.5 16.5 C5 15.5 10 12.5 12.8 8.5 L10.5 8.3 C8 11 4.5 12.8 0.5 13 Z" fill="#e070b0"/><path d="M0.8 15.2 C5 14.2 9 11.8 11.8 8.6" stroke="#5050a8" stroke-width="1.1" fill="none"/><path d="M1.5 10.5 C5 8.5 8 5.5 10 1.5 L7.5 1.3 C6 5 4 7.5 1.5 9.5 Z" fill="#e070b0"/><path d="M2.5 9.6 C5 7.6 7.5 5 9 1.5" stroke="#4a3a98" stroke-width="1.2" fill="none"/><path d="M13.5 1.5 V8 M10.3 4.8 H16.7 M11.2 2.5 L15.8 7 M15.8 2.5 L11.2 7" stroke="#555b66" stroke-width="1.2"/></svg>
<div style="position:absolute;left:99px;top:476px;height:18px;line-height:18px;font-size:11.7px;color:#111;white-space:nowrap">Elastic Waves, Time Explicit&nbsp;&nbsp;<i>(elte)</i></div>
<svg style="position:absolute;left:97px;top:495px;" width="16" height="16" viewBox="0 0 16 16"><rect x="1" y="4" width="15" height="10" rx="3" fill="#0b5fb0"/><rect x="1" y="1" width="5" height="5" fill="#fff"/><rect x="2" y="2" width="3" height="3" fill="none" stroke="#333" stroke-width="1"/></svg>
<div style="position:absolute;left:119px;top:494px;height:18px;line-height:18px;font-size:11.7px;color:#111;white-space:nowrap">Elastic Waves, Time Explicit Model 1</div>
<svg style="position:absolute;left:97px;top:513px;" width="16" height="16" viewBox="0 0 16 16"><rect x="1.5" y="4.5" width="14" height="9" rx="3" fill="#dfe3e8" stroke="#3b4a5e"/><path d="M1.5 9 H15.5" stroke="#3b4a5e"/><rect x="1" y="1" width="5" height="5" fill="#fff"/><rect x="2" y="2" width="3" height="3" fill="none" stroke="#333" stroke-width="1"/></svg>
<div style="position:absolute;left:119px;top:512px;height:18px;line-height:18px;font-size:11.7px;color:#111;white-space:nowrap">Free 1</div>
<svg style="position:absolute;left:97px;top:531px;" width="16" height="16" viewBox="0 0 16 16"><rect x="1" y="4" width="15" height="10" rx="3" fill="#0b5fb0"/><rect x="1" y="1" width="5" height="5" fill="#fff"/><rect x="2" y="2" width="3" height="3" fill="none" stroke="#333" stroke-width="1"/></svg>
<div style="position:absolute;left:119px;top:530px;height:18px;line-height:18px;font-size:11.7px;color:#111;white-space:nowrap">Initial Values 1</div>
<svg style="position:absolute;left:97px;top:549px;" width="16" height="16" viewBox="0 0 16 16"><rect x="1" y="3" width="15" height="10" rx="4" fill="#0b5fb0"/></svg>
<div style="position:absolute;left:119px;top:548px;height:18px;line-height:18px;font-size:11.7px;color:#111;white-space:nowrap">Body Load 1</div>
<svg style="position:absolute;left:97px;top:567px;" width="16" height="16" viewBox="0 0 16 16"><rect x="1.5" y="3.5" width="14" height="9" rx="4" fill="#eef0f3" stroke="#4a5870"/><path d="M1.5 8 H15.5" stroke="#4a5870"/></svg>
<div style="position:absolute;left:119px;top:566px;height:18px;line-height:18px;font-size:11.7px;color:#111;white-space:nowrap">Low-Reflecting Boundary 1</div>
<div style="position:absolute;left:17px;top:584px;width:316px;height:18px;background:#dadadc"></div>
<svg style="position:absolute;left:97px;top:585px;" width="16" height="16" viewBox="0 0 16 16"><rect x="1.5" y="3.5" width="14" height="9" rx="4" fill="#eef0f3" stroke="#4a5870"/><path d="M1.5 8 H15.5" stroke="#4a5870"/></svg>
<div style="position:absolute;left:119px;top:584px;height:18px;line-height:18px;font-size:11.7px;color:#111;white-space:nowrap">Material Discontinuity 1</div>
<svg style="position:absolute;left:63px;top:606px;" width="8" height="10" viewBox="0 0 8 10"><path d="M1 1 L6.5 5 L1 9 Z" fill="none" stroke="#8a8a8a" stroke-width="1.1"/></svg>
<svg style="position:absolute;left:77px;top:603px;" width="16" height="16" viewBox="0 0 16 16"><text x="2" y="7" font-family="Liberation Sans" font-size="7" fill="#3d6fb3">c</text><path d="M9 1 L14 6 M14 1 L9 6 M11.5 0 V7 M8 3.5 H15" stroke="#444" stroke-width="1"/><path d="M2 8.5 H12" stroke="#3d6fb3"/><text x="1" y="15" font-family="Liberation Sans" font-size="7" fill="#3d6fb3">dt</text></svg>
<div style="position:absolute;left:99px;top:602px;height:18px;line-height:18px;font-size:11.7px;color:#111;white-space:nowrap">Point ODEs and DAEs&nbsp;&nbsp;<i>(pode)</i></div>
<svg style="position:absolute;left:63px;top:624px;" width="8" height="10" viewBox="0 0 8 10"><path d="M1 1 L6.5 5 L1 9 Z" fill="none" stroke="#8a8a8a" stroke-width="1.1"/></svg>
<svg style="position:absolute;left:77px;top:621px;" width="16" height="16" viewBox="0 0 16 16"><path d="M8 1.5 L15 14.5 H1 Z" fill="#e6e9ee" stroke="#666" stroke-width="1.2"/><path d="M4.5 8 H11.5 M8 1.5 L4.5 14.5 M8 1.5 L11.5 14.5 M2.8 11 H13.2" stroke="#888" stroke-width=".7"/></svg>
<div style="position:absolute;left:99px;top:620px;height:18px;line-height:18px;font-size:11.7px;color:#111;white-space:nowrap">Mesh 1</div>
<svg style="position:absolute;left:43px;top:642px;" width="8" height="10" viewBox="0 0 8 10"><path d="M1 1 L6.5 5 L1 9 Z" fill="none" stroke="#8a8a8a" stroke-width="1.1"/></svg>
<svg style="position:absolute;left:57px;top:639px;" width="16" height="16" viewBox="0 0 16 16"><path d="M0.5 8 C1.5 5.5 3.5 5.5 4.5 7" stroke="#1ea0b8" stroke-width="1.2" fill="none"/><circle cx="8" cy="9" r="2.8" fill="none" stroke="#1ea0b8" stroke-width="1.2"/><circle cx="12.5" cy="9" r="2.8" fill="none" stroke="#1ea0b8" stroke-width="1.2"/><path d="M4.5 7 L5.5 8.5" stroke="#1ea0b8" stroke-width="1.2"/></svg>
<div style="position:absolute;left:79px;top:638px;height:18px;line-height:18px;font-size:11.7px;color:#111;white-space:nowrap">Study 1 - ELTE (store full solution)</div>
<svg style="position:absolute;left:43px;top:660px;" width="8" height="10" viewBox="0 0 8 10"><path d="M1 1 L6.5 5 L1 9 Z" fill="none" stroke="#8a8a8a" stroke-width="1.1"/></svg>
<svg style="position:absolute;left:57px;top:657px;" width="16" height="16" viewBox="0 0 16 16"><path d="M0.5 8 C1.5 5.5 3.5 5.5 4.5 7" stroke="#1ea0b8" stroke-width="1.2" fill="none"/><circle cx="8" cy="9" r="2.8" fill="none" stroke="#1ea0b8" stroke-width="1.2"/><circle cx="12.5" cy="9" r="2.8" fill="none" stroke="#1ea0b8" stroke-width="1.2"/><path d="M4.5 7 L5.5 8.5" stroke="#1ea0b8" stroke-width="1.2"/></svg>
<div style="position:absolute;left:79px;top:656px;height:18px;line-height:18px;font-size:11.7px;color:#111;white-space:nowrap">Study 2 - ELTE (store at points)</div>
<svg style="position:absolute;left:43px;top:678px;" width="8" height="10" viewBox="0 0 8 10"><path d="M1 1 L6.5 5 L1 9 Z" fill="none" stroke="#8a8a8a" stroke-width="1.1"/></svg>
<svg style="position:absolute;left:57px;top:675px;" width="16" height="16" viewBox="0 0 16 16"><path d="M0.5 8 C1.5 5.5 3.5 5.5 4.5 7" stroke="#1ea0b8" stroke-width="1.2" fill="none"/><circle cx="8" cy="9" r="2.8" fill="none" stroke="#1ea0b8" stroke-width="1.2"/><circle cx="12.5" cy="9" r="2.8" fill="none" stroke="#1ea0b8" stroke-width="1.2"/><path d="M4.5 7 L5.5 8.5" stroke="#1ea0b8" stroke-width="1.2"/></svg>
<div style="position:absolute;left:79px;top:674px;height:18px;line-height:18px;font-size:11.7px;color:#111;white-space:nowrap">Study 3 - Displacement (ODE)</div>
<svg style="position:absolute;left:43px;top:696px;" width="8" height="10" viewBox="0 0 8 10"><path d="M1 1 L6.5 5 L1 9 Z" fill="none" stroke="#8a8a8a" stroke-width="1.1"/></svg>
<svg style="position:absolute;left:57px;top:693px;" width="16" height="16" viewBox="0 0 16 16"><path d="M0.5 11 V15.5 H15" stroke="#888" fill="none"/><rect x="5.5" y="0.5" width="9" height="10" fill="#fff" stroke="#888"/><rect x="3.5" y="2.5" width="10" height="11" fill="#fff" stroke="#888"/><rect x="1.5" y="4.5" width="11" height="10" fill="#fff" stroke="#777"/><rect x="4" y="7" width="6.5" height="6" fill="#c0185c"/></svg>
<div style="position:absolute;left:79px;top:692px;height:18px;line-height:18px;font-size:11.7px;color:#111;white-space:nowrap">Results</div>
<div style="position:absolute;left:344px;top:149px;width:391px;height:694px;background:#f9fafc;border:1px solid #d6d7da"></div>
<div style="position:absolute;left:352px;top:160.34px;font-size:18.5px;line-height:1;color:#6a86b2;white-space:nowrap;">Settings</div>
<div style="position:absolute;left:351px;top:187.15px;font-size:14px;line-height:1;color:#7b97c0;white-space:nowrap;">Material Discontinuity</div>
<div style="position:absolute;left:350px;top:221.84px;font-size:12px;line-height:1;color:#111;white-space:nowrap;">Label:</div>
<div style="position:absolute;left:391px;top:218px;width:309px;height:19px;background:#fff;border:1px solid #d2d4d8"></div>
<div style="position:absolute;left:394px;top:220.84px;font-size:12px;line-height:1;color:#111;white-space:nowrap;">Material Discontinuity 1</div>
<div style="position:absolute;left:707px;top:216px;width:22px;height:24px;background:linear-gradient(#f7f7f7,#e6e6e6);border:1px solid #b4b7bb;border-radius:2px"></div>
<svg style="position:absolute;left:709px;top:219px;" width="18" height="18" viewBox="0 0 18 18"><rect x="3" y="3" width="12" height="12" fill="#fff" stroke="#555" stroke-width="1"/><path d="M6 6 H13 M6 8.5 H13 M6 11 H13" stroke="#555" stroke-width="1"/><path d="M2 16 L7 11 M3 11 H7 V15" stroke="#2e9e3e" stroke-width="1.3" fill="none"/></svg>
<div style="position:absolute;left:345px;top:248px;width:389px;height:25px;background:#dde6f1"></div>
<svg style="position:absolute;left:350px;top:257px;" width="10" height="7" viewBox="0 0 10 7"><path d="M0.5 0.5 H8.5 L4.5 5.5 Z" fill="#333"/></svg>
<div style="position:absolute;left:371px;top:254.25px;font-size:12.7px;line-height:1;color:#111;white-space:nowrap;">Boundary Selection</div>
<div style="position:absolute;left:345px;top:439px;width:389px;height:25px;background:#dde6f1"></div>
<svg style="position:absolute;left:351px;top:446px;" width="8" height="11" viewBox="0 0 8 11"><path d="M1 1 L6.5 5.5 L1 10 Z" fill="none" stroke="#8c8c8c" stroke-width="1"/></svg>
<div style="position:absolute;left:371px;top:445.25px;font-size:12.7px;line-height:1;color:#111;white-space:nowrap;">Override and Contribution</div>
<div style="position:absolute;left:345px;top:466px;width:389px;height:25px;background:#dde6f1"></div>
<svg style="position:absolute;left:351px;top:473px;" width="8" height="11" viewBox="0 0 8 11"><path d="M1 1 L6.5 5.5 L1 10 Z" fill="none" stroke="#8c8c8c" stroke-width="1"/></svg>
<div style="position:absolute;left:371px;top:472.25px;font-size:12.7px;line-height:1;color:#111;white-space:nowrap;">Equation</div>
<div style="position:absolute;left:350px;top:286.34px;font-size:12px;line-height:1;color:#111;white-space:nowrap;">Selection:</div>
<div style="position:absolute;left:411px;top:283px;width:318px;height:19px;background:linear-gradient(#f4f4f4,#e4e4e4);border:1px solid #adadad;border-radius:2px"></div>
<div style="position:absolute;left:423px;top:286.34px;font-size:12px;line-height:1;color:#111;white-space:nowrap;">Manual</div>
<svg style="position:absolute;left:713px;top:289px;" width="10" height="7" viewBox="0 0 10 7"><path d="M0.5 0.5 H8.5 L4.5 5.5 Z" fill="#111"/></svg>
<div style="position:absolute;left:350px;top:309px;width:39px;height:39px;background:linear-gradient(#bcdaf7,#9ac4ef);border:1px solid #4d78b0;border-radius:3px"></div>
<svg style="position:absolute;left:354px;top:321px;" width="30" height="14" viewBox="0 0 30 14"><rect x="0.5" y="0.5" width="29" height="13" fill="#e2e4e6" stroke="#444" stroke-width="1"/><rect x="3" y="4" width="15" height="6" rx="3" fill="#3da23d"/><rect x="18.5" y="2.5" width="9" height="9" fill="#b5b5b5" stroke="#777" stroke-width="1"/></svg>
<div style="position:absolute;left:396px;top:308px;width:267px;height:119px;background:#fff;border:1px solid #d4d6d9;border-bottom:2px solid #c9cacc"></div>
<div style="position:absolute;left:403px;top:313.84px;font-size:12px;line-height:1;color:#111;white-space:nowrap;">15 (absorbing layer)</div>
<div style="position:absolute;left:403px;top:332.84px;font-size:12px;line-height:1;color:#111;white-space:nowrap;">17</div>
<div style="position:absolute;left:403px;top:351.84px;font-size:12px;line-height:1;color:#111;white-space:nowrap;">19 (absorbing layer)</div>
<svg style="position:absolute;left:676px;top:308px;" width="54" height="80" viewBox="0 0 54 80"><circle cx="5" cy="4.5" r="3" fill="#b0b3b7"/><circle cx="8.5" cy="8" r="3" fill="#c2c4c7" stroke="#999" stroke-width=".6"/><rect x="9" y="9" width="7" height="6" fill="#3f78c0"/><path d="M43.5 5 V15 M38.5 10 H48.5" stroke="#b8bbbe" stroke-width="2.6"/><rect x="2.5" y="22.5" width="9" height="11" fill="#fff" stroke="#555"/><path d="M4 25.5 H8 M4 28 H8" stroke="#555"/><rect x="6.5" y="26.5" width="10" height="12" fill="#fff" stroke="#2c3e55" stroke-width="1.2"/><path d="M8.5 30 H14.5 M8.5 32.5 H14.5 M8.5 35 H14.5" stroke="#2c3e55" stroke-width="1.1"/><path d="M38 29.5 H49" stroke="#3f78c0" stroke-width="3"/><rect x="3" y="44" width="9" height="13" fill="#e3a83a"/><rect x="5" y="42.5" width="5" height="3" rx="1.5" fill="#fff" stroke="#666" stroke-width=".8"/><rect x="7.5" y="48.5" width="9" height="10" fill="#fff" stroke="#2c3e55" stroke-width="1.2"/><rect x="37.5" y="43.5" width="13" height="13" fill="none" stroke="#3f78c0" stroke-dasharray="2 1.5"/><path d="M41 45 L49 45 L49 54 Z" fill="#5a8ed0"/><path d="M36 41 L44 53" stroke="#8a6a3a" stroke-width="1.2"/><path d="M41 50 L46 57 L43 58 L39 53 Z" fill="#e8b070"/><rect x="5.5" y="65.5" width="8" height="8" fill="#fff" stroke="#444"/><path d="M9.5 67 V72 M7 69.5 H12" stroke="#444"/><path d="M9.5 62 L8 64 H11 Z M9.5 77 L8 75 H11 Z M2 69.5 L4 68 V71 Z M17 69.5 L15 68 V71 Z" fill="#6d8db5"/></svg>
<div style="position:absolute;left:740px;top:149px;width:717px;height:656px;background:#f8fafc;border:1px solid #a9c9e2"></div>
<div style="position:absolute;left:741px;top:205px;width:715px;height:599px;background:#fff"></div>
<svg style="position:absolute;left:1427px;top:161px;" width="24" height="14" viewBox="0 0 24 14"><path d="M1 3 H9 L5 7 Z" fill="#c3c6ca"/><rect x="16" y="1" width="5" height="7" fill="#c3c6ca"/><rect x="14" y="7" width="9" height="1.5" fill="#c3c6ca"/><rect x="18" y="8" width="1.2" height="5" fill="#c3c6ca"/></svg>
<div style="position:absolute;left:745px;top:155px;width:59px;height:23px;background:#e9eaeb"></div>
<div style="position:absolute;left:750px;top:160.72px;font-size:12.5px;line-height:1;color:#111;white-space:nowrap;">Graphics</div>
<div style="position:absolute;left:812px;top:155px;width:63px;height:24px;background:#fbfcfd;border:1px solid #d3d6da;border-bottom:none"></div>
<div style="position:absolute;left:817px;top:160.72px;font-size:12.5px;line-height:1;color:#3a8cd0;white-space:nowrap;">Plot 2</div>
<svg style="position:absolute;left:857px;top:162px;" width="11" height="10" viewBox="0 0 11 10"><path d="M1 1 L10 9 M10 1 L1 9" stroke="#333" stroke-width="1.3"/></svg>
<div style="position:absolute;left:741px;top:178px;width:715px;height:1px;background:#d9dde2"></div>
<div style="position:absolute;left:812px;top:178px;width:63px;height:1px;background:#fbfcfd"></div>
<svg style="position:absolute;left:745px;top:183px;" width="300" height="22" viewBox="0 0 300 22"><circle cx="9.5" cy="9.5" r="5" fill="none" stroke="#3c5a80" stroke-width="1.6"/><path d="M13 13 L17 17" stroke="#3c5a80" stroke-width="2"/><path d="M7 9.5 H12 M9.5 7 V12" stroke="#3c5a80" stroke-width="1.2"/><circle cx="31.5" cy="9.5" r="5" fill="none" stroke="#3c5a80" stroke-width="1.6"/><path d="M35 13 L39 17" stroke="#3c5a80" stroke-width="2"/><path d="M29 9.5 H34" stroke="#3c5a80" stroke-width="1.2"/><rect x="49.5" y="10.5" width="6" height="6" fill="none" stroke="#3c5a80" stroke-dasharray="1.5 1"/><circle cx="56" cy="9" r="5" fill="none" stroke="#3c5a80" stroke-width="1.6"/><path d="M59.5 12.5 L63.5 16.5" stroke="#3c5a80" stroke-width="2"/><path d="M53.5 9 H58.5 M56 6.5 V11.5" stroke="#3c5a80" stroke-width="1.2"/><path d="M73 9 H80 L76.5 13 Z" fill="#111"/><rect x="91.5" y="3.5" width="14" height="14" fill="none" stroke="#555" stroke-width="1.1"/><path d="M98.5 6 V15 M94 10.5 H103" stroke="#555"/><path d="M98.5 4.5 L96.5 7 H100.5Z M98.5 16.5 L96.5 14 H100.5Z M92.5 10.5 L95 8.5 V12.5Z M104.5 10.5 L102 8.5 V12.5Z" fill="#5a86bb"/><rect x="114" y="3" width="1" height="16" fill="#d5d8dc"/><rect x="121.5" y="2.5" width="17" height="17" rx="2" fill="#c6dcf2" stroke="#3c5a80" stroke-width="1.5"/><path d="M125 6 H135 V16 H125 Z M128.3 6 V16 M131.7 6 V16 M125 9.3 H135 M125 12.7 H135" stroke="#3a72b5" fill="none" stroke-width="1.1"/><rect x="144.5" y="2.5" width="17" height="17" rx="2" fill="#d6e4f2" stroke="#3c5a80" stroke-width="1.5"/><rect x="155" y="5" width="3" height="12" fill="#e0502a"/><rect x="155" y="5" width="3" height="4" fill="#f0c040"/><rect x="168" y="3" width="1" height="16" fill="#d5d8dc"/><path d="M181 9.5 V7 A3.3 3.3 0 0 1 187.6 7 V9.5" fill="none" stroke="#3a72b5" stroke-width="1.8"/><rect x="179" y="9.5" width="10.5" height="8" fill="#3a72b5"/><rect x="199" y="3" width="1" height="16" fill="#d5d8dc"/><circle cx="214.8" cy="10.8" r="5.2" fill="none" stroke="#4a7ab8" stroke-width="3.4" stroke-dasharray="4.2 1.25" transform="rotate(20 214.8 10.8)"/><path d="M231 9 H238 L234.5 13 Z" fill="#111"/><rect x="248.5" y="7" width="16" height="10" rx="1" fill="#3a72b5"/><rect x="253" y="5" width="6" height="3" fill="#3a72b5"/><circle cx="256.5" cy="12" r="3" fill="#fff"/><circle cx="256.5" cy="12" r="1.6" fill="#3a72b5"/><rect x="276" y="3" width="9" height="5" fill="#fff" stroke="#3a72b5" stroke-width="1.5"/><rect x="273" y="8" width="14" height="7" rx="1" fill="#3a72b5"/><rect x="276" y="14" width="9" height="4" fill="#fff" stroke="#3a72b5" stroke-width="1.5"/><rect x="283" y="10" width="1.5" height="1.5" fill="#fff"/></svg>
<svg style="position:absolute;left:1430px;top:211px;" width="22" height="20" viewBox="0 0 22 20"><path d="M1 5 L17 1 L21 16 L4 19 Z" fill="#e6eaf0"/><rect x="4" y="4" width="14" height="12" rx="3" fill="#2c5aa8"/><rect x="6.5" y="6.5" width="9.5" height="7.5" rx="2" fill="#f2d040"/><rect x="6.5" y="6.5" width="4" height="7.5" rx="1" fill="#5a9ad0"/></svg>
<div style="position:absolute;left:758px;top:218px;font-size:13.5px;line-height:1;color:#111;white-space:nowrap;top:221.57px">Time=3E-5 s</div>
<div style="position:absolute;left:975px;top:221.57px;font-size:13.5px;line-height:1;color:#111;white-space:nowrap;">Surface: Pressure (Pa)&nbsp;&nbsp;Line: 1 (1)</div>
<div style="position:absolute;left:745px;top:234.57px;font-size:13.5px;line-height:1;color:#111;white-space:nowrap;">m</div>
<div style="position:absolute;left:1354px;top:788.57px;font-size:13.5px;line-height:1;color:#111;white-space:nowrap;">m</div>
<svg style="position:absolute;left:0px;top:0px;pointer-events:none" width="1468" height="884" viewBox="0 0 1468 884"><rect x="830.7" y="264.3" width="492.8" height="493" fill="#cbcbcb" stroke="#111" stroke-width="1.3"/><defs><clipPath id="dom"><rect x="831" y="264.5" width="492.5" height="492.5"/></clipPath><filter id="bl" x="-5%" y="-5%" width="110%" height="110%"><feGaussianBlur stdDeviation="3"/></filter><filter id="bl2" x="-5%" y="-5%" width="110%" height="110%"><feGaussianBlur stdDeviation="1.7"/></filter><linearGradient id="fadeg" gradientUnits="userSpaceOnUse" x1="0" y1="510.3" x2="0" y2="360"><stop offset="0" stop-color="#fff" stop-opacity="0"/><stop offset=".1" stop-color="#fff" stop-opacity=".06"/><stop offset=".25" stop-color="#fff" stop-opacity=".28"/><stop offset=".45" stop-color="#fff" stop-opacity=".58"/><stop offset=".7" stop-color="#fff" stop-opacity=".88"/><stop offset="1" stop-color="#fff" stop-opacity="1"/></linearGradient><linearGradient id="fadeg2" gradientUnits="userSpaceOnUse" x1="0" y1="510.3" x2="0" y2="420"><stop offset="0" stop-color="#fff" stop-opacity="0"/><stop offset=".12" stop-color="#fff" stop-opacity=".3"/><stop offset=".3" stop-color="#fff" stop-opacity=".62"/><stop offset=".55" stop-color="#fff" stop-opacity=".9"/><stop offset="1" stop-color="#fff" stop-opacity="1"/></linearGradient><mask id="fade2" maskUnits="userSpaceOnUse" x="700" y="200" width="800" height="320"><rect x="700" y="200" width="800" height="311" fill="url(#fadeg2)"/></mask><mask id="fade" maskUnits="userSpaceOnUse" x="700" y="200" width="800" height="320"><rect x="700" y="200" width="800" height="311" fill="url(#fadeg)"/></mask></defs><g clip-path="url(#dom)"><g filter="url(#bl)"><g mask="url(#fade)"><path d="M1077 323.4 A187 187 0 0 1 1258 510.3" fill="none" stroke="#0000ff" stroke-width="14" stroke-opacity="0.12"/><path d="M1077 344.4 A166 166 0 0 1 1237 510.3" fill="none" stroke="#ff0000" stroke-width="12" stroke-opacity="0.64"/><path d="M1077 367.4 A143 143 0 0 1 1214 510.3" fill="none" stroke="#0000ff" stroke-width="12" stroke-opacity="0.52"/><path d="M1077 387.4 A123 123 0 0 1 1194 510.3" fill="none" stroke="#ff0000" stroke-width="10" stroke-opacity="0.42"/><path d="M1077 406.5 A104 104 0 0 1 1175 510.3" fill="none" stroke="#0000ff" stroke-width="9" stroke-opacity="0.3"/><path d="M1077 424.5 A86 86 0 0 1 1157 510.3" fill="none" stroke="#ff0000" stroke-width="8" stroke-opacity="0.08"/><linearGradient id="g1" gradientUnits="userSpaceOnUse" x1="950" y1="380" x2="1010" y2="378"><stop offset="0" stop-color="#0000ff" stop-opacity="0.5"/><stop offset="1" stop-color="#0000ff" stop-opacity="0.12"/></linearGradient><path d="M841.8 471.8 C844.3 464.2 849.6 438.2 857.0 426.0 C864.4 413.8 874.1 405.6 886.0 398.8 C897.9 392.0 913.6 388.1 928.3 385.3 C943.0 382.5 960.7 383.1 974.0 381.9 C987.3 380.7 1002.3 378.6 1008.0 378.0" fill="none" stroke="url(#g1)" stroke-width="12" stroke-linecap="round"/><path d="M1020.0 376.0 C1024.7 373.3 1038.7 365.5 1048.0 360.0 C1057.3 354.5 1071.3 345.8 1076.0 343.0" fill="none" stroke="#ff0000" stroke-width="10" stroke-opacity="0.2" stroke-linecap="round"/><path d="M1005.0 365.0 C1010.8 361.3 1028.2 350.5 1040.0 343.0 C1051.8 335.5 1070.0 323.8 1076.0 320.0" fill="none" stroke="#0000ff" stroke-width="10" stroke-opacity="0.08" stroke-linecap="round"/><path d="M880.0 500.0 C881.7 495.0 884.2 479.5 890.0 470.0 C895.8 460.5 904.2 450.2 915.0 443.0 C925.8 435.8 940.8 430.8 955.0 427.0 C969.2 423.2 992.5 421.2 1000.0 420.0" fill="none" stroke="#ff0000" stroke-width="9" stroke-opacity="0.22" stroke-linecap="round"/><path d="M900.0 505.0 C902.0 500.5 905.3 486.8 912.0 478.0 C918.7 469.2 929.5 459.0 940.0 452.0 C950.5 445.0 969.2 438.7 975.0 436.0" fill="none" stroke="#0000ff" stroke-width="7" stroke-opacity="0.18" stroke-linecap="round"/><path d="M1000.0 462.0 C1005.0 459.8 1019.3 450.7 1030.0 449.0 C1040.7 447.3 1058.3 451.5 1064.0 452.0" fill="none" stroke="#ff0000" stroke-width="7" stroke-opacity="0.3" stroke-linecap="round"/></g><g transform="translate(0 1020.6) scale(1 -1)"><g mask="url(#fade)"><path d="M1077 323.4 A187 187 0 0 1 1258 510.3" fill="none" stroke="#ff0000" stroke-width="14" stroke-opacity="0.12"/><path d="M1077 344.4 A166 166 0 0 1 1237 510.3" fill="none" stroke="#0000ff" stroke-width="12" stroke-opacity="0.64"/><path d="M1077 367.4 A143 143 0 0 1 1214 510.3" fill="none" stroke="#ff0000" stroke-width="12" stroke-opacity="0.52"/><path d="M1077 387.4 A123 123 0 0 1 1194 510.3" fill="none" stroke="#0000ff" stroke-width="10" stroke-opacity="0.42"/><path d="M1077 406.5 A104 104 0 0 1 1175 510.3" fill="none" stroke="#ff0000" stroke-width="9" stroke-opacity="0.3"/><path d="M1077 424.5 A86 86 0 0 1 1157 510.3" fill="none" stroke="#0000ff" stroke-width="8" stroke-opacity="0.08"/><linearGradient id="g6" gradientUnits="userSpaceOnUse" x1="950" y1="380" x2="1010" y2="378"><stop offset="0" stop-color="#ff0000" stop-opacity="0.5"/><stop offset="1" stop-color="#ff0000" stop-opacity="0.12"/></linearGradient><path d="M841.8 471.8 C844.3 464.2 849.6 438.2 857.0 426.0 C864.4 413.8 874.1 405.6 886.0 398.8 C897.9 392.0 913.6 388.1 928.3 385.3 C943.0 382.5 960.7 383.1 974.0 381.9 C987.3 380.7 1002.3 378.6 1008.0 378.0" fill="none" stroke="url(#g6)" stroke-width="12" stroke-linecap="round"/><path d="M1020.0 376.0 C1024.7 373.3 1038.7 365.5 1048.0 360.0 C1057.3 354.5 1071.3 345.8 1076.0 343.0" fill="none" stroke="#0000ff" stroke-width="10" stroke-opacity="0.2" stroke-linecap="round"/><path d="M1005.0 365.0 C1010.8 361.3 1028.2 350.5 1040.0 343.0 C1051.8 335.5 1070.0 323.8 1076.0 320.0" fill="none" stroke="#ff0000" stroke-width="10" stroke-opacity="0.08" stroke-linecap="round"/><path d="M880.0 500.0 C881.7 495.0 884.2 479.5 890.0 470.0 C895.8 460.5 904.2 450.2 915.0 443.0 C925.8 435.8 940.8 430.8 955.0 427.0 C969.2 423.2 992.5 421.2 1000.0 420.0" fill="none" stroke="#0000ff" stroke-width="9" stroke-opacity="0.22" stroke-linecap="round"/><path d="M900.0 505.0 C902.0 500.5 905.3 486.8 912.0 478.0 C918.7 469.2 929.5 459.0 940.0 452.0 C950.5 445.0 969.2 438.7 975.0 436.0" fill="none" stroke="#ff0000" stroke-width="7" stroke-opacity="0.18" stroke-linecap="round"/><path d="M1000.0 462.0 C1005.0 459.8 1019.3 450.7 1030.0 449.0 C1040.7 447.3 1058.3 451.5 1064.0 452.0" fill="none" stroke="#0000ff" stroke-width="7" stroke-opacity="0.3" stroke-linecap="round"/></g></g></g><g filter="url(#bl2)"><g mask="url(#fade2)"><linearGradient id="g2" gradientUnits="userSpaceOnUse" x1="850" y1="505" x2="895" y2="418"><stop offset="0" stop-color="#ff0000" stop-opacity="0.1"/><stop offset="1" stop-color="#ff0000" stop-opacity="0.95"/></linearGradient><path d="M849.0 500.0 C849.5 495.8 850.7 482.5 852.0 475.0 C853.3 467.5 854.2 461.8 857.0 454.8 C859.8 447.8 864.2 439.3 869.0 432.8 C873.8 426.3 878.9 420.8 886.0 415.8 C893.1 410.8 901.5 406.4 911.4 403.0 C921.3 399.6 934.9 397.0 945.3 395.5 C955.7 394.0 963.6 394.4 974.0 393.8 C984.4 393.2 998.0 392.9 1007.5 392.0 C1017.0 391.1 1023.4 389.2 1031.3 388.5 C1039.2 387.8 1047.9 387.8 1055.0 387.7 C1062.1 387.6 1070.8 387.9 1074.0 388.0" fill="none" stroke="url(#g2)" stroke-width="9" stroke-linecap="round"/><linearGradient id="g3" gradientUnits="userSpaceOnUse" x1="862" y1="508" x2="905" y2="430"><stop offset="0" stop-color="#0000ff" stop-opacity="0.1"/><stop offset="1" stop-color="#0000ff" stop-opacity="0.95"/></linearGradient><path d="M864.0 500.0 C864.5 495.8 865.3 482.5 867.0 475.0 C868.7 467.5 870.0 461.6 874.0 454.8 C878.0 448.1 884.8 440.1 891.0 434.5 C897.2 428.9 903.2 425.0 911.4 421.0 C919.6 417.0 929.8 412.7 940.2 410.7 C950.6 408.7 965.0 410.0 974.0 409.0 C983.0 408.0 985.0 406.3 994.0 404.7 C1003.0 403.1 1017.7 400.7 1027.9 399.6 C1038.1 398.5 1047.3 398.2 1055.0 397.9 C1062.7 397.6 1070.8 398.0 1074.0 398.0" fill="none" stroke="url(#g3)" stroke-width="9" stroke-linecap="round"/><path d="M990.0 392.5 C993.7 392.2 1003.7 391.5 1012.0 390.8 C1020.3 390.1 1035.3 388.9 1040.0 388.5" fill="none" stroke="#8a0000" stroke-width="6" stroke-opacity="0.8" stroke-linecap="round"/><path d="M985.0 407.5 C989.2 406.9 1000.0 405.2 1010.0 404.0 C1020.0 402.8 1039.2 401.1 1045.0 400.5" fill="none" stroke="#000088" stroke-width="6.5" stroke-opacity="0.85" stroke-linecap="round"/><path d="M999.0 414.8 C1002.5 415.7 1012.9 418.0 1020.0 420.0 C1027.1 422.0 1035.2 424.4 1041.5 426.7 C1047.8 429.0 1052.3 431.4 1058.0 434.0 C1063.7 436.6 1072.5 440.7 1075.4 442.0" fill="none" stroke="#ff0000" stroke-width="7" stroke-opacity="0.95" stroke-linecap="round"/><path d="M1041.5 426.7 C1044.2 425.8 1052.3 422.7 1058.0 421.0 C1063.7 419.3 1072.5 417.2 1075.4 416.5" fill="none" stroke="#ff0000" stroke-width="7" stroke-opacity="0.9" stroke-linecap="round"/><linearGradient id="g4" gradientUnits="userSpaceOnUse" x1="955" y1="500" x2="1035" y2="438"><stop offset="0" stop-color="#0000ff" stop-opacity="0.25"/><stop offset="1" stop-color="#0000ff" stop-opacity="0.95"/></linearGradient><path d="M952.0 512.0 C952.5 509.8 952.3 503.8 955.0 499.0 C957.7 494.2 963.0 488.2 968.0 483.0 C973.0 477.8 979.3 472.5 985.0 467.5 C990.7 462.5 996.3 456.8 1002.0 452.8 C1007.7 448.9 1012.0 446.9 1019.0 443.8 C1026.0 440.7 1037.5 434.8 1044.0 434.2 C1050.5 433.6 1052.8 437.9 1058.0 440.5 C1063.2 443.1 1072.2 448.0 1075.0 449.5" fill="none" stroke="url(#g4)" stroke-width="6.5" stroke-linecap="round"/><path d="M1055.0 428.0 C1058.3 427.0 1071.7 423.0 1075.0 422.0" fill="none" stroke="#0000ff" stroke-width="5" stroke-opacity="0.6" stroke-linecap="round"/><path d="M1038.0 426.5 C1039.3 426.7 1044.7 427.3 1046.0 427.5" fill="none" stroke="#8a0000" stroke-width="4.5" stroke-opacity="0.8" stroke-linecap="round"/><linearGradient id="g5" gradientUnits="userSpaceOnUse" x1="950" y1="500" x2="1030" y2="430"><stop offset="0" stop-color="#ff0000" stop-opacity="0.2"/><stop offset="1" stop-color="#ff0000" stop-opacity="0.65"/></linearGradient><path d="M946.0 512.0 C946.1 509.8 946.0 504.0 946.5 499.0 C947.0 494.0 947.6 487.7 949.0 482.0 C950.4 476.3 951.5 470.5 955.0 465.0 C958.5 459.5 963.3 453.8 970.0 449.0 C976.7 444.2 985.0 439.3 995.0 436.0 C1005.0 432.7 1024.2 430.2 1030.0 429.0" fill="none" stroke="url(#g5)" stroke-width="5.5" stroke-linecap="round"/><path d="M1010.0 438.0 C1006.7 440.3 997.0 446.8 990.0 452.0 C983.0 457.2 973.3 463.5 968.0 469.0 C962.7 474.5 959.7 482.3 958.0 485.0" fill="none" stroke="#0000ff" stroke-width="3.5" stroke-opacity="0.45" stroke-linecap="round"/></g><g transform="translate(0 1020.6) scale(1 -1)"><g mask="url(#fade2)"><linearGradient id="g7" gradientUnits="userSpaceOnUse" x1="850" y1="505" x2="895" y2="418"><stop offset="0" stop-color="#0000ff" stop-opacity="0.1"/><stop offset="1" stop-color="#0000ff" stop-opacity="0.95"/></linearGradient><path d="M849.0 500.0 C849.5 495.8 850.7 482.5 852.0 475.0 C853.3 467.5 854.2 461.8 857.0 454.8 C859.8 447.8 864.2 439.3 869.0 432.8 C873.8 426.3 878.9 420.8 886.0 415.8 C893.1 410.8 901.5 406.4 911.4 403.0 C921.3 399.6 934.9 397.0 945.3 395.5 C955.7 394.0 963.6 394.4 974.0 393.8 C984.4 393.2 998.0 392.9 1007.5 392.0 C1017.0 391.1 1023.4 389.2 1031.3 388.5 C1039.2 387.8 1047.9 387.8 1055.0 387.7 C1062.1 387.6 1070.8 387.9 1074.0 388.0" fill="none" stroke="url(#g7)" stroke-width="9" stroke-linecap="round"/><linearGradient id="g8" gradientUnits="userSpaceOnUse" x1="862" y1="508" x2="905" y2="430"><stop offset="0" stop-color="#ff0000" stop-opacity="0.1"/><stop offset="1" stop-color="#ff0000" stop-opacity="0.95"/></linearGradient><path d="M864.0 500.0 C864.5 495.8 865.3 482.5 867.0 475.0 C868.7 467.5 870.0 461.6 874.0 454.8 C878.0 448.1 884.8 440.1 891.0 434.5 C897.2 428.9 903.2 425.0 911.4 421.0 C919.6 417.0 929.8 412.7 940.2 410.7 C950.6 408.7 965.0 410.0 974.0 409.0 C983.0 408.0 985.0 406.3 994.0 404.7 C1003.0 403.1 1017.7 400.7 1027.9 399.6 C1038.1 398.5 1047.3 398.2 1055.0 397.9 C1062.7 397.6 1070.8 398.0 1074.0 398.0" fill="none" stroke="url(#g8)" stroke-width="9" stroke-linecap="round"/><path d="M990.0 392.5 C993.7 392.2 1003.7 391.5 1012.0 390.8 C1020.3 390.1 1035.3 388.9 1040.0 388.5" fill="none" stroke="#000088" stroke-width="6" stroke-opacity="0.8" stroke-linecap="round"/><path d="M985.0 407.5 C989.2 406.9 1000.0 405.2 1010.0 404.0 C1020.0 402.8 1039.2 401.1 1045.0 400.5" fill="none" stroke="#8a0000" stroke-width="6.5" stroke-opacity="0.85" stroke-linecap="round"/><path d="M999.0 414.8 C1002.5 415.7 1012.9 418.0 1020.0 420.0 C1027.1 422.0 1035.2 424.4 1041.5 426.7 C1047.8 429.0 1052.3 431.4 1058.0 434.0 C1063.7 436.6 1072.5 440.7 1075.4 442.0" fill="none" stroke="#0000ff" stroke-width="7" stroke-opacity="0.95" stroke-linecap="round"/><path d="M1041.5 426.7 C1044.2 425.8 1052.3 422.7 1058.0 421.0 C1063.7 419.3 1072.5 417.2 1075.4 416.5" fill="none" stroke="#0000ff" stroke-width="7" stroke-opacity="0.9" stroke-linecap="round"/><linearGradient id="g9" gradientUnits="userSpaceOnUse" x1="955" y1="500" x2="1035" y2="438"><stop offset="0" stop-color="#ff0000" stop-opacity="0.25"/><stop offset="1" stop-color="#ff0000" stop-opacity="0.95"/></linearGradient><path d="M952.0 512.0 C952.5 509.8 952.3 503.8 955.0 499.0 C957.7 494.2 963.0 488.2 968.0 483.0 C973.0 477.8 979.3 472.5 985.0 467.5 C990.7 462.5 996.3 456.8 1002.0 452.8 C1007.7 448.9 1012.0 446.9 1019.0 443.8 C1026.0 440.7 1037.5 434.8 1044.0 434.2 C1050.5 433.6 1052.8 437.9 1058.0 440.5 C1063.2 443.1 1072.2 448.0 1075.0 449.5" fill="none" stroke="url(#g9)" stroke-width="6.5" stroke-linecap="round"/><path d="M1055.0 428.0 C1058.3 427.0 1071.7 423.0 1075.0 422.0" fill="none" stroke="#ff0000" stroke-width="5" stroke-opacity="0.6" stroke-linecap="round"/><path d="M1038.0 426.5 C1039.3 426.7 1044.7 427.3 1046.0 427.5" fill="none" stroke="#000088" stroke-width="4.5" stroke-opacity="0.8" stroke-linecap="round"/><linearGradient id="g10" gradientUnits="userSpaceOnUse" x1="950" y1="500" x2="1030" y2="430"><stop offset="0" stop-color="#0000ff" stop-opacity="0.2"/><stop offset="1" stop-color="#0000ff" stop-opacity="0.65"/></linearGradient><path d="M946.0 512.0 C946.1 509.8 946.0 504.0 946.5 499.0 C947.0 494.0 947.6 487.7 949.0 482.0 C950.4 476.3 951.5 470.5 955.0 465.0 C958.5 459.5 963.3 453.8 970.0 449.0 C976.7 444.2 985.0 439.3 995.0 436.0 C1005.0 432.7 1024.2 430.2 1030.0 429.0" fill="none" stroke="url(#g10)" stroke-width="5.5" stroke-linecap="round"/><path d="M1010.0 438.0 C1006.7 440.3 997.0 446.8 990.0 452.0 C983.0 457.2 973.3 463.5 968.0 469.0 C962.7 474.5 959.7 482.3 958.0 485.0" fill="none" stroke="#ff0000" stroke-width="3.5" stroke-opacity="0.45" stroke-linecap="round"/></g></g><path d="M945.0 507.0 C945.2 505.7 945.8 502.0 946.5 499.0 C947.2 496.0 948.6 490.7 949.0 489.0" fill="none" stroke="#ff0000" stroke-width="5.5" stroke-opacity="0.6" stroke-linecap="round"/><path d="M952.0 507.0 C952.5 505.5 953.8 501.2 955.0 498.0 C956.2 494.8 958.3 489.7 959.0 488.0" fill="none" stroke="#0000ff" stroke-width="5.5" stroke-opacity="0.55" stroke-linecap="round"/><g transform="translate(0 1020.6) scale(1 -1)"><path d="M945.0 507.0 C945.2 505.7 945.8 502.0 946.5 499.0 C947.2 496.0 948.6 490.7 949.0 489.0" fill="none" stroke="#0000ff" stroke-width="5.5" stroke-opacity="0.6" stroke-linecap="round"/><path d="M952.0 507.0 C952.5 505.5 953.8 501.2 955.0 498.0 C956.2 494.8 958.3 489.7 959.0 488.0" fill="none" stroke="#ff0000" stroke-width="5.5" stroke-opacity="0.55" stroke-linecap="round"/></g></g></g><rect x="790.8" y="240.8" width="573.4" height="539.6" fill="none" stroke="#111" stroke-width="1.5"/><path d="M831.2 780.5 V775.5 M831.2 240.8 V245.8" stroke="#111" stroke-width="1.3"/><path d="M913.3 780.5 V775.5 M913.3 240.8 V245.8" stroke="#111" stroke-width="1.3"/><path d="M995.5 780.5 V775.5 M995.5 240.8 V245.8" stroke="#111" stroke-width="1.3"/><path d="M1077.6 780.5 V775.5 M1077.6 240.8 V245.8" stroke="#111" stroke-width="1.3"/><path d="M1159.7 780.5 V775.5 M1159.7 240.8 V245.8" stroke="#111" stroke-width="1.3"/><path d="M1241.8 780.5 V775.5 M1241.8 240.8 V245.8" stroke="#111" stroke-width="1.3"/><path d="M1324.0 780.5 V775.5 M1324.0 240.8 V245.8" stroke="#111" stroke-width="1.3"/><path d="M790.8 773.1 H795.8 M1364.2 773.1 H1359.2" stroke="#111" stroke-width="1.3"/><path d="M790.8 740.2 H795.8 M1364.2 740.2 H1359.2" stroke="#111" stroke-width="1.3"/><path d="M790.8 707.4 H795.8 M1364.2 707.4 H1359.2" stroke="#111" stroke-width="1.3"/><path d="M790.8 674.5 H795.8 M1364.2 674.5 H1359.2" stroke="#111" stroke-width="1.3"/><path d="M790.8 641.7 H795.8 M1364.2 641.7 H1359.2" stroke="#111" stroke-width="1.3"/><path d="M790.8 608.9 H795.8 M1364.2 608.9 H1359.2" stroke="#111" stroke-width="1.3"/><path d="M790.8 576.0 H795.8 M1364.2 576.0 H1359.2" stroke="#111" stroke-width="1.3"/><path d="M790.8 543.1 H795.8 M1364.2 543.1 H1359.2" stroke="#111" stroke-width="1.3"/><path d="M790.8 510.3 H795.8 M1364.2 510.3 H1359.2" stroke="#111" stroke-width="1.3"/><path d="M790.8 477.5 H795.8 M1364.2 477.5 H1359.2" stroke="#111" stroke-width="1.3"/><path d="M790.8 444.6 H795.8 M1364.2 444.6 H1359.2" stroke="#111" stroke-width="1.3"/><path d="M790.8 411.8 H795.8 M1364.2 411.8 H1359.2" stroke="#111" stroke-width="1.3"/><path d="M790.8 378.9 H795.8 M1364.2 378.9 H1359.2" stroke="#111" stroke-width="1.3"/><path d="M790.8 346.1 H795.8 M1364.2 346.1 H1359.2" stroke="#111" stroke-width="1.3"/><path d="M790.8 313.2 H795.8 M1364.2 313.2 H1359.2" stroke="#111" stroke-width="1.3"/><path d="M790.8 280.4 H795.8 M1364.2 280.4 H1359.2" stroke="#111" stroke-width="1.3"/><path d="M790.8 247.5 H795.8 M1364.2 247.5 H1359.2" stroke="#111" stroke-width="1.3"/></svg>
<div style="position:absolute;left:781.2px;width:100px;text-align:center;top:787.57px;font-size:13.5px;line-height:1;color:#111">-0.15</div>
<div style="position:absolute;left:863.3px;width:100px;text-align:center;top:787.57px;font-size:13.5px;line-height:1;color:#111">-0.1</div>
<div style="position:absolute;left:945.5px;width:100px;text-align:center;top:787.57px;font-size:13.5px;line-height:1;color:#111">-0.05</div>
<div style="position:absolute;left:1027.6px;width:100px;text-align:center;top:787.57px;font-size:13.5px;line-height:1;color:#111">0</div>
<div style="position:absolute;left:1109.7px;width:100px;text-align:center;top:787.57px;font-size:13.5px;line-height:1;color:#111">0.05</div>
<div style="position:absolute;left:1191.8px;width:100px;text-align:center;top:787.57px;font-size:13.5px;line-height:1;color:#111">0.1</div>
<div style="position:absolute;left:1274.0px;width:100px;text-align:center;top:787.57px;font-size:13.5px;line-height:1;color:#111">0.15</div>
<div style="position:absolute;left:685px;width:100px;text-align:right;top:766.07px;font-size:13.5px;line-height:1;color:#111">-0.16</div>
<div style="position:absolute;left:685px;width:100px;text-align:right;top:733.22px;font-size:13.5px;line-height:1;color:#111">-0.14</div>
<div style="position:absolute;left:685px;width:100px;text-align:right;top:700.37px;font-size:13.5px;line-height:1;color:#111">-0.12</div>
<div style="position:absolute;left:685px;width:100px;text-align:right;top:667.52px;font-size:13.5px;line-height:1;color:#111">-0.1</div>
<div style="position:absolute;left:685px;width:100px;text-align:right;top:634.67px;font-size:13.5px;line-height:1;color:#111">-0.08</div>
<div style="position:absolute;left:685px;width:100px;text-align:right;top:601.82px;font-size:13.5px;line-height:1;color:#111">-0.06</div>
<div style="position:absolute;left:685px;width:100px;text-align:right;top:568.97px;font-size:13.5px;line-height:1;color:#111">-0.04</div>
<div style="position:absolute;left:685px;width:100px;text-align:right;top:536.12px;font-size:13.5px;line-height:1;color:#111">-0.02</div>
<div style="position:absolute;left:685px;width:100px;text-align:right;top:503.27px;font-size:13.5px;line-height:1;color:#111">0</div>
<div style="position:absolute;left:685px;width:100px;text-align:right;top:470.42px;font-size:13.5px;line-height:1;color:#111">0.02</div>
<div style="position:absolute;left:685px;width:100px;text-align:right;top:437.57px;font-size:13.5px;line-height:1;color:#111">0.04</div>
<div style="position:absolute;left:685px;width:100px;text-align:right;top:404.72px;font-size:13.5px;line-height:1;color:#111">0.06</div>
<div style="position:absolute;left:685px;width:100px;text-align:right;top:371.87px;font-size:13.5px;line-height:1;color:#111">0.08</div>
<div style="position:absolute;left:685px;width:100px;text-align:right;top:339.02px;font-size:13.5px;line-height:1;color:#111">0.1</div>
<div style="position:absolute;left:685px;width:100px;text-align:right;top:306.17px;font-size:13.5px;line-height:1;color:#111">0.12</div>
<div style="position:absolute;left:685px;width:100px;text-align:right;top:273.32px;font-size:13.5px;line-height:1;color:#111">0.14</div>
<div style="position:absolute;left:1385px;top:285.5px;width:16px;height:490px;background:linear-gradient(#7a0000 0%,#ff0000 20%,#cccccc 50%,#0000ff 80%,#000080 100%)"></div>
<svg style="position:absolute;left:0px;top:0px;pointer-events:none" width="1468" height="884" viewBox="0 0 1468 884"><path d="M1385 285.5 H1389 M1397 285.5 H1401" stroke="#111" stroke-width="1"/><path d="M1385 334.5 H1389 M1397 334.5 H1401" stroke="#111" stroke-width="1"/><path d="M1385 383.5 H1389 M1397 383.5 H1401" stroke="#111" stroke-width="1"/><path d="M1385 432.5 H1389 M1397 432.5 H1401" stroke="#111" stroke-width="1"/><path d="M1385 481.5 H1389 M1397 481.5 H1401" stroke="#111" stroke-width="1"/><path d="M1385 530.5 H1389 M1397 530.5 H1401" stroke="#111" stroke-width="1"/><path d="M1385 579.5 H1389 M1397 579.5 H1401" stroke="#111" stroke-width="1"/><path d="M1385 628.5 H1389 M1397 628.5 H1401" stroke="#111" stroke-width="1"/><path d="M1385 677.5 H1389 M1397 677.5 H1401" stroke="#111" stroke-width="1"/><path d="M1385 726.5 H1389 M1397 726.5 H1401" stroke="#111" stroke-width="1"/><path d="M1385 775.5 H1389 M1397 775.5 H1401" stroke="#111" stroke-width="1"/></svg>
<div style="position:absolute;left:1409px;top:279.0px;font-size:13px;line-height:1;color:#111;white-space:nowrap;">5</div>
<div style="position:absolute;left:1409px;top:328.0px;font-size:13px;line-height:1;color:#111;white-space:nowrap;">4</div>
<div style="position:absolute;left:1409px;top:377.0px;font-size:13px;line-height:1;color:#111;white-space:nowrap;">3</div>
<div style="position:absolute;left:1409px;top:426.0px;font-size:13px;line-height:1;color:#111;white-space:nowrap;">2</div>
<div style="position:absolute;left:1409px;top:475.0px;font-size:13px;line-height:1;color:#111;white-space:nowrap;">1</div>
<div style="position:absolute;left:1409px;top:524.0px;font-size:13px;line-height:1;color:#111;white-space:nowrap;">0</div>
<div style="position:absolute;left:1409px;top:573.0px;font-size:13px;line-height:1;color:#111;white-space:nowrap;">-1</div>
<div style="position:absolute;left:1409px;top:622.0px;font-size:13px;line-height:1;color:#111;white-space:nowrap;">-2</div>
<div style="position:absolute;left:1409px;top:671.0px;font-size:13px;line-height:1;color:#111;white-space:nowrap;">-3</div>
<div style="position:absolute;left:1409px;top:720.0px;font-size:13px;line-height:1;color:#111;white-space:nowrap;">-4</div>
<div style="position:absolute;left:1409px;top:769.0px;font-size:13px;line-height:1;color:#111;white-space:nowrap;">-5</div>
<div style="position:absolute;left:1401px;top:249.0px;font-size:13px;line-height:1;color:#111;white-space:nowrap;">Pa</div>
<div style="position:absolute;left:1401px;top:265.57px;font-size:13.5px;line-height:1;color:#111;white-space:nowrap;">&#215;10</div>
<div style="position:absolute;left:1425.5px;top:260.11px;font-size:10.5px;line-height:1;color:#111;white-space:nowrap;">11</div>
<div style="position:absolute;left:1074.9px;top:263px;width:4px;height:495px;background:#0a0a8a;border-radius:2px;box-shadow:0 0 0 1px rgba(190,190,240,.8)"></div>
<div style="position:absolute;left:740px;top:810px;width:717px;height:33px;background:#f9fafc;border:1px solid #d6d7da"></div>
<div style="position:absolute;left:745px;top:816px;width:89px;height:27px;background:#fbfcfd;border:1px solid #d3d6da;border-bottom:none"></div>
<div style="position:absolute;left:750px;top:822.42px;font-size:12.5px;line-height:1;color:#4a6f9e;white-space:nowrap;">Messages</div>
<svg style="position:absolute;left:818px;top:821px;" width="10" height="10" viewBox="0 0 10 10"><path d="M1 1 L9 9 M9 1 L1 9" stroke="#c4c6c9" stroke-width="1.2"/></svg>
<div style="position:absolute;left:842px;top:816px;width:61px;height:23px;background:#e9eaeb"></div>
<div style="position:absolute;left:846px;top:822.42px;font-size:12.5px;line-height:1;color:#111;white-space:nowrap;">Progress</div>
<div style="position:absolute;left:911px;top:816px;width:30px;height:23px;background:#e9eaeb"></div>
<div style="position:absolute;left:914px;top:822.42px;font-size:12.5px;line-height:1;color:#111;white-space:nowrap;">Log</div>
<div style="position:absolute;left:948px;top:816px;width:58px;height:23px;background:#e9eaeb"></div>
<div style="position:absolute;left:952px;top:822.42px;font-size:12.5px;line-height:1;color:#111;white-space:nowrap;">Table</div>
<svg style="position:absolute;left:990px;top:821px;" width="10" height="10" viewBox="0 0 10 10"><path d="M1 1 L9 9 M9 1 L1 9" stroke="#c4c6c9" stroke-width="1.2"/></svg>
<div style="position:absolute;left:741px;top:839px;width:715px;height:1px;background:#d9dde2"></div>
<div style="position:absolute;left:746px;top:839px;width:87px;height:1px;background:#fbfcfd"></div>
<svg style="position:absolute;left:1423px;top:822px;" width="24" height="14" viewBox="0 0 24 14"><path d="M1 3 H9 L5 7 Z" fill="#c3c6ca"/><rect x="16" y="1" width="5" height="7" fill="#c3c6ca"/><rect x="14" y="7" width="9" height="1.5" fill="#c3c6ca"/><rect x="18" y="8" width="1.2" height="5" fill="#c3c6ca"/></svg>
<div style="position:absolute;left:4px;top:847px;width:1460px;height:33px;background:#f0eeed"></div>
<div style="position:absolute;left:781px;top:857.84px;font-size:12px;line-height:1;color:#222;white-space:nowrap;">3.1 GB | 5.21 GB</div>
</body></html>
